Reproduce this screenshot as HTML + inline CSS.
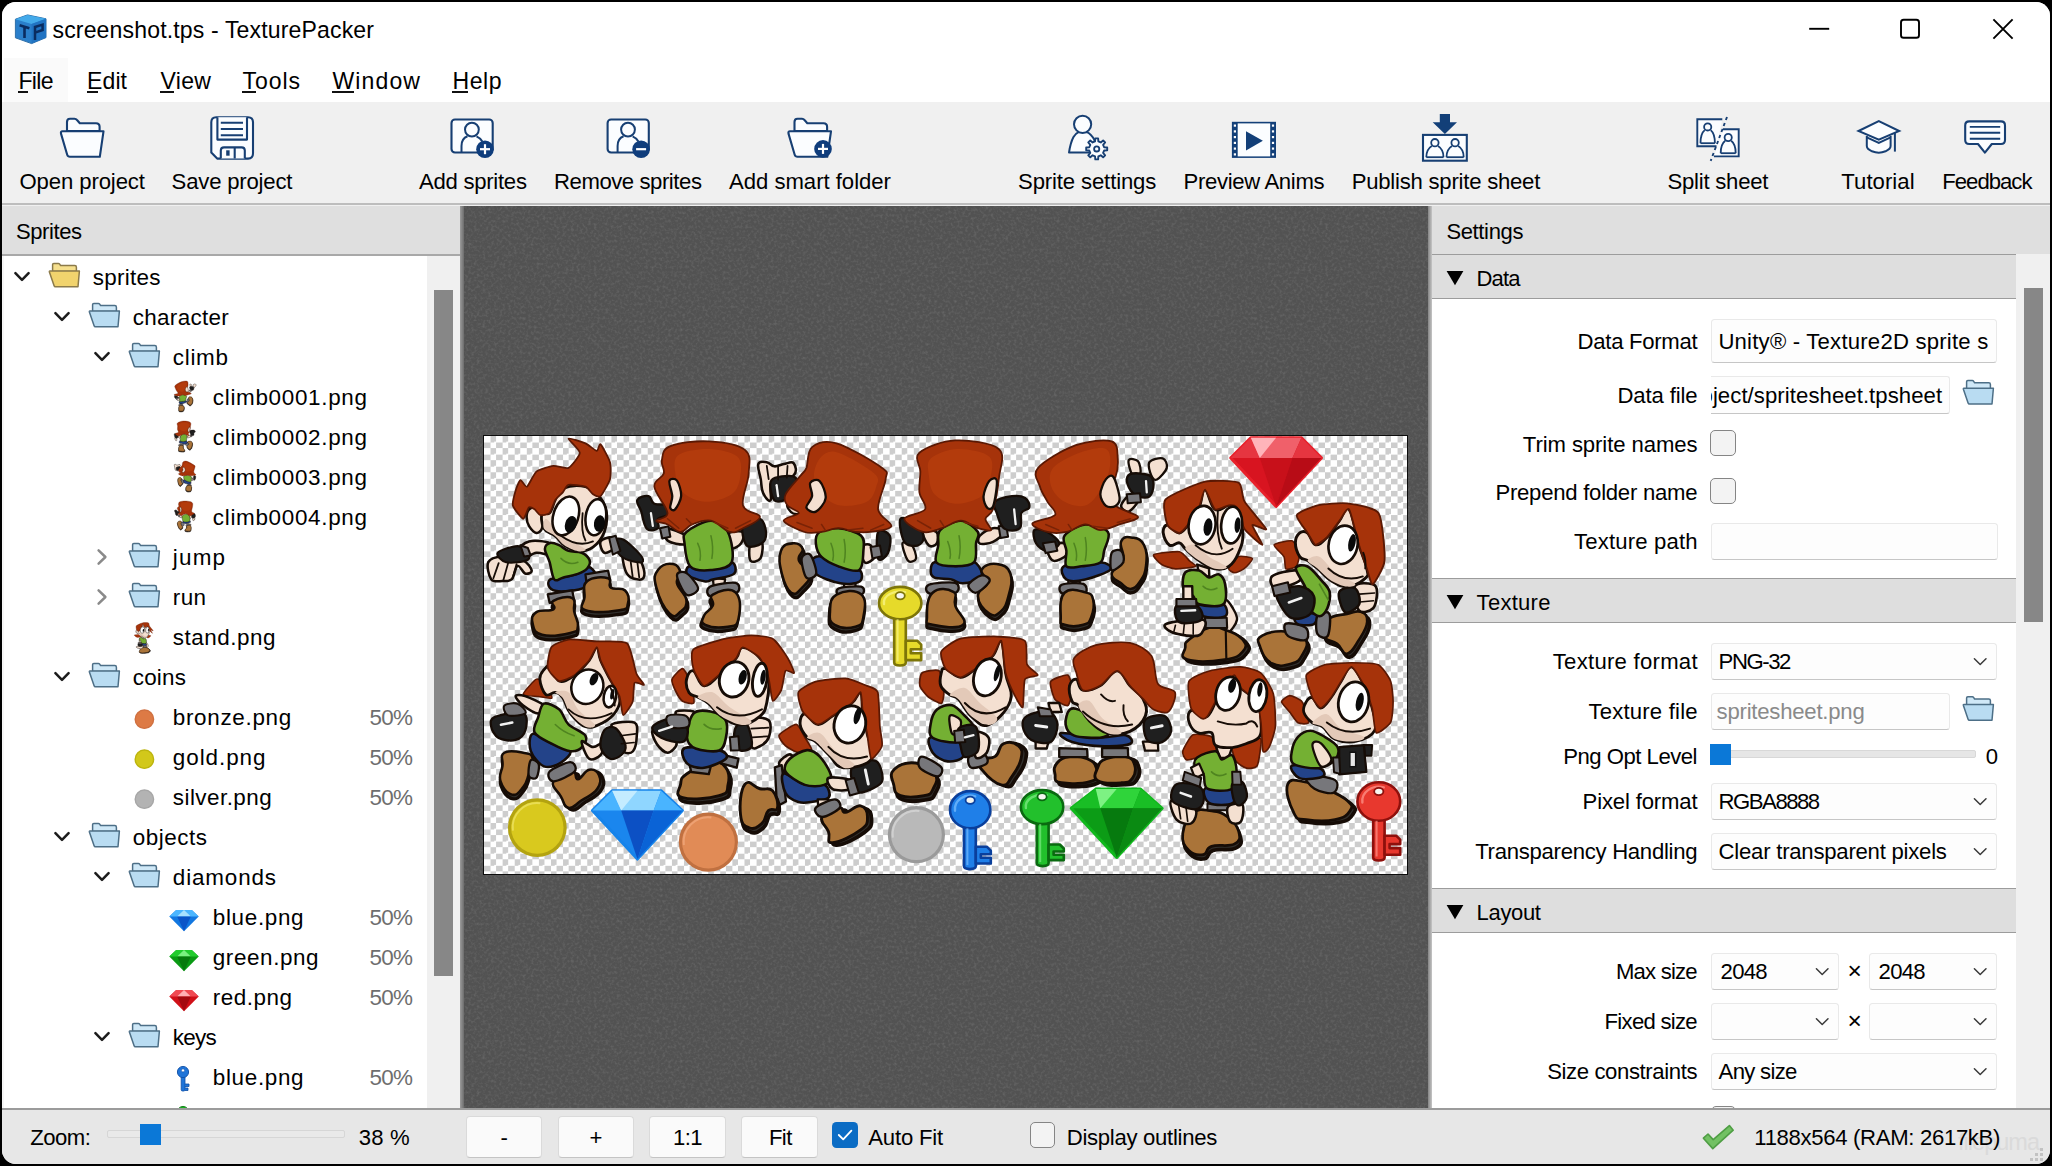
<!DOCTYPE html>
<html><head><meta charset="utf-8"><title>TexturePacker</title>
<style>
html,body{margin:0;padding:0;background:#000;}
body{width:2052px;height:1166px;position:relative;overflow:hidden;font-family:"Liberation Sans",sans-serif;}
.t{position:absolute;white-space:nowrap;}
.b{position:absolute;}
svg{position:absolute;overflow:visible}
</style></head><body>
<div id="win" style="position:absolute;left:2px;top:2px;width:2048px;height:1162px;background:#f0f0f0;border-radius:14px;overflow:hidden"></div>
<div class="b" style="left:2.00px;top:2.00px;width:2048.00px;height:100.00px;background:#ffffff;border-radius:14px 14px 0 0;"></div>
<div class="b" style="left:4.00px;top:58.00px;width:64.00px;height:44.00px;background:#fafafa;"></div>
<div class="b" style="left:2.00px;top:102.00px;width:2048.00px;height:102.00px;background:#f0f0f0;"></div>
<div class="b" style="left:2.00px;top:203.00px;width:2048.00px;height:2.00px;background:#bdbdbd;"></div>
<svg class="b" style="left:12px;top:12px" width="38" height="36" viewBox="12 12 38 36"><path d="M15.4 19.2 L27.5 14.9 L46 18.8 L46 37.6 L31.6 43.6 L15.4 37.8 Z" fill="#2a7fcb" stroke="#2f6fa8" stroke-width="1" stroke-linejoin="round"/><path d="M15.4 19.2 L27.5 14.9 L46 18.8 L31.6 24 Z" fill="#43aaea"/><path d="M31.6 24 L46 18.8 L46 37.6 L31.6 43.6 Z" fill="#2173c2"/><path d="M19.6 25.2 L29.4 28.2 M24.5 26.8 V38" stroke="#0a2c60" stroke-width="2.6" fill="none"/><path d="M35 40 V27 L42.6 24.6 V30 L35 32.6" stroke="#0a2c60" stroke-width="2.5" fill="none"/></svg>
<div class="t" style="left:52.50px;top:17.43px;font-size:23.05px;line-height:27.66px;letter-spacing:0.145px;color:#000;">screenshot.tps - TexturePacker</div>
<div class="t" style="left:18.50px;top:67.53px;font-size:23.05px;line-height:27.66px;letter-spacing:-0.714px;color:#000;">File</div>
<div class="b" style="left:18.20px;top:91.30px;width:9.60px;height:1.80px;background:#111;"></div>
<div class="t" style="left:87.00px;top:67.53px;font-size:23.05px;line-height:27.66px;letter-spacing:0.093px;color:#000;">Edit</div>
<div class="b" style="left:86.70px;top:91.30px;width:11.80px;height:1.80px;background:#111;"></div>
<div class="t" style="left:160.50px;top:67.53px;font-size:23.05px;line-height:27.66px;letter-spacing:0.318px;color:#000;">View</div>
<div class="b" style="left:160.20px;top:91.30px;width:13.80px;height:1.80px;background:#111;"></div>
<div class="t" style="left:242.50px;top:67.53px;font-size:23.05px;line-height:27.66px;letter-spacing:0.922px;color:#000;">Tools</div>
<div class="b" style="left:242.20px;top:91.30px;width:13.80px;height:1.80px;background:#111;"></div>
<div class="t" style="left:332.50px;top:67.53px;font-size:23.05px;line-height:27.66px;letter-spacing:1.103px;color:#000;">Window</div>
<div class="b" style="left:332.20px;top:91.30px;width:21.40px;height:1.80px;background:#111;"></div>
<div class="t" style="left:452.50px;top:67.53px;font-size:23.05px;line-height:27.66px;letter-spacing:0.531px;color:#000;">Help</div>
<div class="b" style="left:452.20px;top:91.30px;width:15.60px;height:1.80px;background:#111;"></div>
<svg class="b" style="left:1800px;top:10px" width="240" height="40" viewBox="1800 10 240 40" fill="none" stroke="#000" stroke-width="1.9"><path d="M1809.2 28.8 H1829.2"/><rect x="1901" y="19.8" width="18" height="18" rx="2.6"/><path d="M1993.4 19.4 L2012.6 38.6 M2012.6 19.4 L1993.4 38.6"/></svg>
<div class="t" style="left:19.50px;top:168.80px;font-size:22.13px;line-height:26.56px;letter-spacing:-0.111px;color:#000;">Open project</div>
<div class="t" style="left:171.60px;top:168.80px;font-size:22.13px;line-height:26.56px;letter-spacing:-0.193px;color:#000;">Save project</div>
<div class="t" style="left:419.00px;top:168.80px;font-size:22.13px;line-height:26.56px;letter-spacing:-0.272px;color:#000;">Add sprites</div>
<div class="t" style="left:554.00px;top:168.80px;font-size:22.13px;line-height:26.56px;letter-spacing:-0.442px;color:#000;">Remove sprites</div>
<div class="t" style="left:729.00px;top:168.80px;font-size:22.13px;line-height:26.56px;letter-spacing:-0.025px;color:#000;">Add smart folder</div>
<div class="t" style="left:1018.00px;top:168.80px;font-size:22.13px;line-height:26.56px;letter-spacing:-0.132px;color:#000;">Sprite settings</div>
<div class="t" style="left:1183.50px;top:168.80px;font-size:22.13px;line-height:26.56px;letter-spacing:-0.337px;color:#000;">Preview Anims</div>
<div class="t" style="left:1351.70px;top:168.80px;font-size:22.13px;line-height:26.56px;letter-spacing:-0.234px;color:#000;">Publish sprite sheet</div>
<div class="t" style="left:1667.50px;top:168.80px;font-size:22.13px;line-height:26.56px;letter-spacing:-0.235px;color:#000;">Split sheet</div>
<div class="t" style="left:1841.30px;top:168.80px;font-size:22.13px;line-height:26.56px;letter-spacing:0.046px;color:#000;">Tutorial</div>
<div class="t" style="left:1942.30px;top:168.80px;font-size:22.13px;line-height:26.56px;letter-spacing:-0.999px;color:#000;">Feedback</div>
<svg class="b" style="left:0;top:0" width="2052" height="210" viewBox="0 0 2052 210">
<g transform="translate(0.0,0)" fill="#fbfdff" stroke="#173f73" stroke-width="2.1" stroke-linejoin="round"><path d="M67 131 V122 Q67 118.8 70 118.8 H74.5 Q76 118.8 77 120 L79.8 123.2 H96 Q99.6 123.2 99.6 126.8 V131 Z"/><path d="M62.5 131.3 H103.5 L99.8 156.8 H70 Q67.8 156.8 67.2 154.8 L61 133.6 Q60.5 131.3 62.5 131.3 Z"/></g>
<g fill="#fbfdff" stroke="#173f73" stroke-width="2.1" stroke-linejoin="round"><path d="M216.2 117.2 H248 Q253 117.2 253 122.2 V153.6 Q253 158.6 248 158.6 H217.2 L211.3 152.6 V122.2 Q211.3 117.2 216.2 117.2 Z"/><path d="M217.4 117.2 V139.6 H247 V117.2"/><path d="M220.8 122.8 H243 M220.8 129 H243 M220.8 135.2 H243" stroke-width="1.9"/><path d="M220.8 158.6 V150.6 Q220.8 147.4 224 147.4 H241.6 Q244.8 147.4 244.8 150.6 V158.6 M234.7 147.4 V158.6"/><rect x="226.2" y="150.3" width="3.4" height="5.4" fill="#173f73" stroke="none"/></g>
<g transform="translate(0.0,0)"><rect x="451.5" y="119.5" width="41.2" height="33" rx="3.5" fill="#fbfdff" stroke="#173f73" stroke-width="2.1"/><circle cx="471.9" cy="129.6" r="6.9" fill="#fbfdff" stroke="#173f73" stroke-width="2"/><path d="M461.5 152.5 V146 Q461.5 138.5 467.5 136.3 M476.5 136.3 Q480.5 138 482.3 141.5" fill="none" stroke="#173f73" stroke-width="2"/><circle cx="485.0" cy="149.2" r="8.8" fill="#0f3d7c"/><path d="M480.0 149.2 h10" stroke="#fff" stroke-width="2.2"/><path d="M485.0 144.2 v10" stroke="#fff" stroke-width="2.2"/></g>
<g transform="translate(156.1,0)"><rect x="451.5" y="119.5" width="41.2" height="33" rx="3.5" fill="#fbfdff" stroke="#173f73" stroke-width="2.1"/><circle cx="471.9" cy="129.6" r="6.9" fill="#fbfdff" stroke="#173f73" stroke-width="2"/><path d="M461.5 152.5 V146 Q461.5 138.5 467.5 136.3 M476.5 136.3 Q480.5 138 482.3 141.5" fill="none" stroke="#173f73" stroke-width="2"/><circle cx="485.0" cy="149.2" r="8.8" fill="#0f3d7c"/><path d="M480.0 149.2 h10" stroke="#fff" stroke-width="2.2"/></g>
<g transform="translate(727.5,0)" fill="#fbfdff" stroke="#173f73" stroke-width="2.1" stroke-linejoin="round"><path d="M67 131 V122 Q67 118.8 70 118.8 H74.5 Q76 118.8 77 120 L79.8 123.2 H96 Q99.6 123.2 99.6 126.8 V131 Z"/><path d="M62.5 131.3 H103.5 L99.8 156.8 H70 Q67.8 156.8 67.2 154.8 L61 133.6 Q60.5 131.3 62.5 131.3 Z"/></g>
<circle cx="823.0" cy="148.9" r="8.8" fill="#0f3d7c"/><path d="M818.0 148.9 h10" stroke="#fff" stroke-width="2.2"/><path d="M823.0 143.9 v10" stroke="#fff" stroke-width="2.2"/>
<g fill="#fbfdff" stroke="#173f73" stroke-width="2" stroke-linejoin="round"><path d="M1069 152.6 Q1070.5 142.5 1073.5 137 Q1075.5 133.6 1078.5 132.2 L1087 132.2 Q1091 134 1094.5 140 L1094.5 152.6 Z"/><circle cx="1082.6" cy="124.3" r="8.6"/></g>
<path d="M1104.12 147.24 L1107.21 147.49 L1107.21 150.31 L1104.12 150.56 L1103.12 152.97 L1105.13 155.33 L1103.13 157.33 L1100.77 155.32 L1098.36 156.32 L1098.11 159.41 L1095.29 159.41 L1095.04 156.32 L1092.63 155.32 L1090.27 157.33 L1088.27 155.33 L1090.28 152.97 L1089.28 150.56 L1086.19 150.31 L1086.19 147.49 L1089.28 147.24 L1090.28 144.83 L1088.27 142.47 L1090.27 140.47 L1092.63 142.48 L1095.04 141.48 L1095.29 138.39 L1098.11 138.39 L1098.36 141.48 L1100.77 142.48 L1103.13 140.47 L1105.13 142.47 L1103.12 144.83 Z" fill="#fbfdff" stroke="#173f73" stroke-width="1.9" stroke-linejoin="round"/><circle cx="1096.7" cy="148.9" r="2.6" fill="#fbfdff" stroke="#173f73" stroke-width="1.8"/>
<rect x="1231.9" y="121.8" width="44.1" height="36.1" fill="#123f78"/><rect x="1237.7" y="123.4" width="32.5" height="33" fill="#fbfdff"/>
<rect x="1233.8" y="124.5" width="2.2" height="2.2" fill="#fff"/><rect x="1271.9" y="124.5" width="2.2" height="2.2" fill="#fff"/>
<rect x="1233.8" y="130.3" width="2.2" height="2.2" fill="#fff"/><rect x="1271.9" y="130.3" width="2.2" height="2.2" fill="#fff"/>
<rect x="1233.8" y="136.0" width="2.2" height="2.2" fill="#fff"/><rect x="1271.9" y="136.0" width="2.2" height="2.2" fill="#fff"/>
<rect x="1233.8" y="141.8" width="2.2" height="2.2" fill="#fff"/><rect x="1271.9" y="141.8" width="2.2" height="2.2" fill="#fff"/>
<rect x="1233.8" y="147.5" width="2.2" height="2.2" fill="#fff"/><rect x="1271.9" y="147.5" width="2.2" height="2.2" fill="#fff"/>
<rect x="1233.8" y="153.3" width="2.2" height="2.2" fill="#fff"/><rect x="1271.9" y="153.3" width="2.2" height="2.2" fill="#fff"/>
<path d="M1246 131.3 V150.6 L1262.9 140.8 Z" fill="#123f78"/>
<path d="M1439.8 114 H1450 V122.3 H1457 L1444.9 133.9 L1432.7 122.3 H1439.8 Z" fill="#123f78"/>
<rect x="1423" y="134.9" width="43.8" height="25.8" fill="#fbfdff" stroke="#173f73" stroke-width="2.1"/>
<path d="M1426.3 157.2 H1426.3 Q1426.3 149.4 1431.8 146.0 M1443.5 157.2 Q1443.5 149.4 1438.0 146.0" fill="none" stroke="#173f73" stroke-width="1.8"/><path d="M1426.3 157.2 H1443.5" stroke="#173f73" stroke-width="1.8"/><circle cx="1434.9" cy="142.7" r="3.7" fill="#fbfdff" stroke="#173f73" stroke-width="1.8"/>
<path d="M1446.5 157.2 H1446.5 Q1446.5 149.4 1452.0 146.0 M1463.7 157.2 Q1463.7 149.4 1458.2 146.0" fill="none" stroke="#173f73" stroke-width="1.8"/><path d="M1446.5 157.2 H1463.7" stroke="#173f73" stroke-width="1.8"/><circle cx="1455.1" cy="142.7" r="3.7" fill="#fbfdff" stroke="#173f73" stroke-width="1.8"/>
<g fill="none" stroke="#173f73" stroke-width="1.9"><path d="M1722.3 119.2 H1697.3 V146.3 H1716.5" fill="#fbfdff"/><path d="M1722.8 129.3 H1738.7 V156.4 H1714" fill="#fbfdff"/><path d="M1727 117 L1710.7 160.8" stroke-dasharray="3.2 3.2"/></g>
<path d="M1700.5 143.2 H1700.5 Q1700.5 133.5 1704.7 130.1 M1714.9 143.2 Q1714.9 133.5 1710.7 130.1" fill="none" stroke="#173f73" stroke-width="1.8"/><path d="M1700.5 143.2 H1714.9" stroke="#173f73" stroke-width="1.8"/><circle cx="1707.7" cy="126.9" r="3.6" fill="#fbfdff" stroke="#173f73" stroke-width="1.8"/>
<path d="M1720.7 153.2 H1720.7 Q1720.7 144.1 1725.2 140.7 M1735.7 153.2 Q1735.7 144.1 1731.2 140.7" fill="none" stroke="#173f73" stroke-width="1.8"/><path d="M1720.7 153.2 H1735.7" stroke="#173f73" stroke-width="1.8"/><circle cx="1728.2" cy="137.5" r="3.6" fill="#fbfdff" stroke="#173f73" stroke-width="1.8"/>
<g fill="#fbfdff" stroke="#173f73" stroke-width="2" stroke-linejoin="miter"><path d="M1866.8 136 V146 Q1866.8 149 1872 151.3 Q1878.8 154 1885.5 151.3 Q1890.6 149 1890.6 146 V136"/><path d="M1858.5 131 L1878.8 121 L1899.2 131 L1878.8 139.6 Z"/><path d="M1866.8 137.4 L1878.8 143 L1890.6 137.4" fill="none"/><path d="M1894.9 133 V151.6" fill="none"/></g>
<g fill="#fbfdff" stroke="#173f73" stroke-width="2.1" stroke-linejoin="round"><path d="M1969.2 121.4 H2001 Q2005 121.4 2005 125.4 V140 Q2005 144 2001 144 H1991.8 L1984.9 152.6 L1978 144 H1969.2 Q1965.2 144 1965.2 140 V125.4 Q1965.2 121.4 1969.2 121.4 Z"/><path d="M1969.8 126.9 H2000.2 M1969.8 132.7 H2000.2 M1969.8 138.7 H2000.2" stroke-width="1.9"/></g>
</svg>
<div class="b" style="left:2.00px;top:206.00px;width:458.00px;height:48.00px;background:#dfdfdf;"></div>
<div class="b" style="left:2.00px;top:254.00px;width:458.00px;height:1.60px;background:#a8a8a8;"></div>
<div class="t" style="left:16.00px;top:218.90px;font-size:22.03px;line-height:26.44px;letter-spacing:-0.428px;color:#000;">Sprites</div>
<div class="b" style="left:2.00px;top:255.60px;width:425.00px;height:853.00px;background:#ffffff;"></div>
<div class="b" style="left:2.00px;top:255.60px;width:2.20px;height:853.00px;background:#f6f6f6;"></div>
<div class="b" style="left:427.00px;top:255.60px;width:33.50px;height:853.00px;background:#f0f0f0;"></div>
<div class="b" style="left:434.10px;top:290.00px;width:18.80px;height:685.70px;background:#878787;"></div>
<div class="b" style="left:0;top:0;width:462px;height:1108.5px;overflow:hidden"><svg class="b" style="left:0;top:0" width="462" height="1109" viewBox="0 0 462 1109">
<path d="M15.4 273.1 L22.0 279.9 L28.6 273.1" fill="none" stroke="#1c1c1c" stroke-width="2.5" stroke-linecap="round" stroke-linejoin="round"/>
<g transform="translate(48.8,262.6)" stroke="#8b7a4a" stroke-width="1.5" stroke-linejoin="round"><path d="M3.8 9 V2 Q3.8 0.8 5 0.8 H9.5 Q10.4 0.8 10.9 1.6 L11.8 3 H26 Q27.6 3 27.6 4.6 V9 Z" fill="#f6e08e"/><path d="M1 8.4 H30.6 L29.2 24.2 H6.6 Q5.6 24.2 5.3 23.2 L0.6 9.4 Q0.4 8.4 1 8.4 Z" fill="#f1d36d"/></g>
<path d="M55.4 313.1 L62.0 319.9 L68.6 313.1" fill="none" stroke="#1c1c1c" stroke-width="2.5" stroke-linecap="round" stroke-linejoin="round"/>
<g transform="translate(88.8,302.6)" stroke="#4d6f87" stroke-width="1.5" stroke-linejoin="round"><path d="M3.8 9 V2 Q3.8 0.8 5 0.8 H9.5 Q10.4 0.8 10.9 1.6 L11.8 3 H26 Q27.6 3 27.6 4.6 V9 Z" fill="#cfe8f7"/><path d="M1 8.4 H30.6 L29.2 24.2 H6.6 Q5.6 24.2 5.3 23.2 L0.6 9.4 Q0.4 8.4 1 8.4 Z" fill="#b9dcf2"/></g>
<path d="M95.4 353.1 L102.0 359.9 L108.6 353.1" fill="none" stroke="#1c1c1c" stroke-width="2.5" stroke-linecap="round" stroke-linejoin="round"/>
<g transform="translate(128.8,342.6)" stroke="#4d6f87" stroke-width="1.5" stroke-linejoin="round"><path d="M3.8 9 V2 Q3.8 0.8 5 0.8 H9.5 Q10.4 0.8 10.9 1.6 L11.8 3 H26 Q27.6 3 27.6 4.6 V9 Z" fill="#cfe8f7"/><path d="M1 8.4 H30.6 L29.2 24.2 H6.6 Q5.6 24.2 5.3 23.2 L0.6 9.4 Q0.4 8.4 1 8.4 Z" fill="#b9dcf2"/></g>
<g transform="translate(185.00,396.10) scale(0.1624) translate(-1099.0,-533.0)"><g transform="translate(1010,430) scale(0.18868)"><path d="M590 400 C592 385 625 345 640 340 C655 335 684 355 682 370 C680 385 645 427 630 432 C615 437 588 415 590 400 Z" fill="#f4e0d1" stroke="#160c06" stroke-width="13.5" stroke-linejoin="round"/><path d="M630 160 C635 148 670 153 680 165 C690 177 697 218 692 230 C687 242 660 249 650 237 C640 225 625 172 630 160 Z" fill="#f4e0d1" stroke="#160c06" stroke-width="12.15" stroke-linejoin="round"/><path d="M740 170 C750 155 795 145 810 150 C825 155 837 181 832 200 C827 219 794 255 780 262 C766 269 757 255 750 240 C743 225 730 185 740 170 Z" fill="#f4e0d1" stroke="#160c06" stroke-width="12.15" stroke-linejoin="round"/><path d="M620 260 C622 245 630 233 650 230 C670 227 721 230 740 240 C759 250 762 271 762 290 C762 309 754 342 740 352 C726 362 697 357 680 352 C663 347 650 335 640 320 C630 305 618 275 620 260 Z" fill="#1f1f1f" stroke="#160c06" stroke-width="12.15" stroke-linejoin="round"/><path d="M620 340 L690 335 L695 382 L625 388 Z" fill="#77777b" stroke="#160c06" stroke-width="10.8" stroke-linejoin="round"/><path d="M200 620 C210 605 273 593 290 600 C307 607 312 645 302 660 C292 675 247 699 230 692 C213 685 190 635 200 620 Z" fill="#f4e0d1" stroke="#160c06" stroke-width="13.5" stroke-linejoin="round"/><path d="M130 530 C140 520 178 528 200 540 C222 552 262 583 262 600 C262 617 220 642 200 642 C180 642 152 621 140 602 C128 583 120 540 130 530 Z" fill="#1f1f1f" stroke="#160c06" stroke-width="12.15" stroke-linejoin="round"/><path d="M175 600 L240 590 L252 640 L190 652 Z" fill="#77777b" stroke="#160c06" stroke-width="10.8" stroke-linejoin="round"/><path d="M310 795 L370 795 L372 835 L312 835 Z" fill="#f4e0d1" stroke="#160c06" stroke-width="12.15" stroke-linejoin="round"/><path d="M290 720 C320 705 440 697 480 700 C520 703 545 725 532 740 C519 755 439 783 400 792 C361 801 318 804 300 792 C282 780 260 735 290 720 Z" fill="#234389" stroke="#160c06" stroke-width="13.5" stroke-linejoin="round"/><path d="M290 560 C307 537 362 503 400 500 C438 497 503 517 520 540 C537 563 507 613 500 640 C493 667 500 688 480 702 C460 716 410 719 380 722 C350 725 313 736 300 722 C287 708 302 667 300 640 C298 613 273 583 290 560 Z" fill="#74b033" stroke="#160c06" stroke-width="13.5" stroke-linejoin="round"/><path d="M592 611 C605 584 624 587 652 591 C681 596 698 597 714 631 C732 667 730 697 724 741 C720 787 712 795 692 823 C674 852 666 861 642 863 C620 866 616 852 592 833 C570 815 541 812 542 783 C545 755 591 752 602 711 C615 672 581 640 592 611 Z" fill="#32302d" stroke="#160c06" stroke-width="17.55" stroke-linejoin="round"/><path d="M590 590 C602 562 622 565 650 570 C678 575 695 575 712 610 C729 645 727 675 722 720 C717 765 709 774 690 802 C671 830 663 840 640 842 C617 844 613 831 590 812 C567 793 538 790 540 762 C542 734 588 730 600 690 C612 650 578 618 590 590 Z" fill="#aa7439" stroke="#160c06" stroke-width="13.5" stroke-linejoin="round"/><path d="M540 650 C548 633 580 632 590 640 C600 648 610 683 602 700 C594 717 550 750 540 742 C530 734 532 667 540 650 Z" fill="#77777b" stroke="#160c06" stroke-width="12.15" stroke-linejoin="round"/><path d="M275 820 C293 811 370 807 390 815 C410 823 414 858 396 867 C378 876 300 875 280 867 C260 859 257 829 275 820 Z" fill="#77777b" stroke="#160c06" stroke-width="12.15" stroke-linejoin="round"/><path d="M293 883 C324 853 368 873 403 881 C439 891 438 891 445 921 C453 952 448 981 435 1011 C423 1043 427 1044 393 1053 C360 1064 321 1064 293 1053 C265 1044 273 1051 273 1011 C273 972 263 914 293 883 Z" fill="#32302d" stroke="#160c06" stroke-width="17.55" stroke-linejoin="round"/><path d="M290 862 C320 832 365 851 400 860 C435 869 435 870 442 900 C449 930 444 959 432 990 C420 1021 423 1022 390 1032 C357 1042 318 1042 290 1032 C262 1022 270 1030 270 990 C270 950 260 892 290 862 Z" fill="#aa7439" stroke="#160c06" stroke-width="13.5" stroke-linejoin="round"/><path d="M150 200 C182 163 285 103 350 80 C415 57 503 48 540 60 C577 72 569 118 572 150 C575 182 569 225 560 250 C551 275 520 275 520 300 C520 325 533 373 560 400 C587 427 677 443 680 460 C683 477 613 488 580 500 C547 512 510 530 480 530 C450 530 430 498 400 500 C370 502 333 533 300 540 C267 547 230 548 200 540 C170 532 113 510 120 495 C127 480 227 469 240 450 C253 431 213 405 200 380 C187 355 168 330 160 300 C152 270 118 237 150 200 Z" fill="#a6330a" stroke="#5a1803" stroke-width="9.45" stroke-linejoin="round"/><path d="M230 200 C255 170 323 137 370 120 C417 103 483 87 510 100 C537 113 535 163 530 200 C525 237 502 287 480 320 C458 353 432 390 400 400 C368 410 320 397 290 380 C260 363 230 330 220 300 C210 270 205 230 230 200 Z" fill="#b33b0c"/><path d="M510 260 C522 245 538 233 550 250 C562 267 580 335 582 360 C584 385 572 395 560 402 C548 409 523 412 510 402 C497 392 480 364 480 340 C480 316 498 275 510 260 Z" fill="#f4e0d1" stroke="#160c06" stroke-width="12.15" stroke-linejoin="round"/></g></g>
<g transform="translate(185.00,436.10) scale(0.1624) translate(-966.0,-533.0)"><g transform="translate(880,430) scale(0.18868)"><path d="M530 560 C542 546 578 523 600 520 C622 517 660 528 660 540 C660 552 622 582 600 592 C578 602 542 607 530 602 C518 597 518 574 530 560 Z" fill="#f4e0d1" stroke="#160c06" stroke-width="13.5" stroke-linejoin="round"/><path d="M230 540 C237 528 288 530 300 540 C312 550 309 588 302 600 C295 612 272 622 260 612 C248 602 223 552 230 540 Z" fill="#f4e0d1" stroke="#160c06" stroke-width="13.5" stroke-linejoin="round"/><path d="M120 600 C123 586 158 597 170 610 C182 623 195 666 192 680 C189 694 162 705 150 692 C138 679 117 614 120 600 Z" fill="#f4e0d1" stroke="#160c06" stroke-width="12.15" stroke-linejoin="round"/><path d="M110 470 C122 455 180 483 200 500 C220 517 232 551 232 570 C232 589 217 608 200 612 C183 616 145 616 130 592 C115 568 98 485 110 470 Z" fill="#1f1f1f" stroke="#160c06" stroke-width="12.15" stroke-linejoin="round"/><path d="M290 700 C312 695 365 720 400 720 C435 720 476 690 500 700 C524 710 552 761 542 780 C532 799 467 810 440 812 C413 814 405 797 380 792 C355 787 308 789 290 782 C272 775 270 764 270 750 C270 736 268 705 290 700 Z" fill="#234389" stroke="#160c06" stroke-width="13.5" stroke-linejoin="round"/><path d="M320 530 C340 508 397 478 430 480 C463 482 507 520 520 540 C533 560 513 573 510 600 C507 627 518 680 500 700 C482 720 433 722 400 722 C367 722 315 721 300 702 C285 683 307 639 310 610 C313 581 300 552 320 530 Z" fill="#74b033" stroke="#160c06" stroke-width="13.5" stroke-linejoin="round"/><path d="M544 761 C556 738 589 727 624 731 C660 736 682 742 696 781 C711 821 699 854 686 901 C675 949 669 962 644 983 C621 1005 613 1013 584 993 C557 974 527 939 524 901 C522 864 570 864 574 831 C579 799 533 785 544 761 Z" fill="#32302d" stroke="#160c06" stroke-width="17.55" stroke-linejoin="round"/><path d="M540 740 C552 717 585 705 620 710 C655 715 678 720 692 760 C706 800 694 833 682 880 C670 927 664 941 640 962 C616 983 608 991 580 972 C552 953 522 918 520 880 C518 842 565 843 570 810 C575 777 528 763 540 740 Z" fill="#aa7439" stroke="#160c06" stroke-width="13.5" stroke-linejoin="round"/><path d="M470 820 C475 805 521 773 540 770 C559 767 587 785 582 800 C577 815 529 859 510 862 C491 865 465 835 470 820 Z" fill="#77777b" stroke="#160c06" stroke-width="12.15" stroke-linejoin="round"/><path d="M260 820 C282 810 376 803 400 810 C424 817 424 852 402 862 C380 872 289 874 265 867 C241 860 238 830 260 820 Z" fill="#77777b" stroke="#160c06" stroke-width="12.15" stroke-linejoin="round"/><path d="M281 883 C314 853 363 863 391 878 C419 895 389 911 401 951 C413 993 471 1030 443 1053 C415 1078 326 1064 281 1053 C236 1044 251 1052 251 1011 C251 972 249 915 281 883 Z" fill="#32302d" stroke="#160c06" stroke-width="17.55" stroke-linejoin="round"/><path d="M280 862 C313 831 362 841 390 857 C418 873 388 889 400 930 C412 971 470 1008 442 1032 C414 1056 325 1042 280 1032 C235 1022 250 1030 250 990 C250 950 247 893 280 862 Z" fill="#aa7439" stroke="#160c06" stroke-width="13.5" stroke-linejoin="round"/><path d="M630 510 L670 505 L680 565 L640 572 Z" fill="#77777b" stroke="#160c06" stroke-width="10.8" stroke-linejoin="round"/><path d="M610 380 C626 362 668 354 700 350 C732 346 752 348 770 360 C788 372 796 394 792 410 C788 426 760 418 750 440 C740 462 760 504 742 520 C724 536 684 538 660 522 C636 506 630 468 620 440 C610 412 594 398 610 380 Z" fill="#1f1f1f" stroke="#160c06" stroke-width="12.15" stroke-linejoin="round"/><path d="M210 120 C241 92 330 58 400 55 C470 52 591 68 630 100 C669 132 637 197 632 250 C627 303 612 383 600 420 C588 457 562 452 560 470 C558 488 597 522 590 530 C583 538 547 528 520 520 C493 512 462 480 430 480 C398 480 363 510 330 520 C297 530 263 548 230 540 C197 532 128 490 130 470 C132 450 227 443 240 420 C253 397 214 363 210 330 C206 297 215 255 215 220 C215 185 179 148 210 120 Z" fill="#a6330a" stroke="#5a1803" stroke-width="9.45" stroke-linejoin="round"/><path d="M270 150 C295 127 358 102 410 100 C462 98 551 113 580 140 C609 167 592 225 585 260 C578 295 571 328 540 350 C509 372 442 392 400 390 C358 388 313 365 290 340 C267 315 263 272 260 240 C257 208 245 173 270 150 Z" fill="#b33b0c"/><path d="M580 270 C592 256 616 246 620 268 C624 290 610 376 602 400 C594 424 579 420 570 412 C561 404 548 374 550 350 C552 326 568 284 580 270 Z" fill="#f4e0d1" stroke="#160c06" stroke-width="12.15" stroke-linejoin="round"/></g></g>
<g transform="translate(185.00,476.10) scale(0.1624) translate(-824.5,-534.0)"><g transform="translate(750,430) scale(0.18868)"><path d="M590 620 C595 605 628 601 640 610 C652 619 667 657 662 672 C657 687 622 711 610 702 C598 693 585 635 590 620 Z" fill="#f4e0d1" stroke="#160c06" stroke-width="13.5" stroke-linejoin="round"/><path d="M680 540 C690 520 733 541 742 560 C751 579 742 632 732 652 C722 672 689 701 680 682 C671 663 670 560 680 540 Z" fill="#1f1f1f" stroke="#160c06" stroke-width="12.15" stroke-linejoin="round"/><path d="M640 620 L690 612 L700 668 L650 680 Z" fill="#77777b" stroke="#160c06" stroke-width="10.8" stroke-linejoin="round"/><path d="M500 805 L560 805 L560 845 L500 845 Z" fill="#f4e0d1" stroke="#160c06" stroke-width="12.15" stroke-linejoin="round"/><path d="M330 690 C335 675 357 665 380 670 C403 675 437 708 470 720 C503 732 561 726 580 740 C599 754 599 790 582 802 C565 814 519 819 480 812 C441 805 375 782 350 762 C325 742 325 705 330 690 Z" fill="#234389" stroke="#160c06" stroke-width="13.5" stroke-linejoin="round"/><path d="M370 540 C390 527 433 517 470 520 C507 523 568 540 590 560 C612 580 604 610 602 640 C600 670 602 728 580 742 C558 756 503 734 470 722 C437 710 400 692 380 672 C360 652 352 622 350 600 C348 578 350 553 370 540 Z" fill="#74b033" stroke="#160c06" stroke-width="13.5" stroke-linejoin="round"/><path d="M173 660 C188 622 212 623 238 620 C265 618 282 629 288 650 C296 671 259 680 268 710 C278 741 324 747 328 780 C333 813 312 828 288 852 C265 876 254 899 228 882 C203 866 191 834 178 782 C166 730 160 698 173 660 Z" fill="#32302d" stroke="#160c06" stroke-width="17.55" stroke-linejoin="round"/><path d="M165 640 C179 602 203 602 230 600 C257 598 273 609 280 630 C287 651 251 660 260 690 C269 720 315 727 320 760 C325 793 303 808 280 832 C257 856 246 878 220 862 C194 846 183 814 170 762 C157 710 151 678 165 640 Z" fill="#aa7439" stroke="#160c06" stroke-width="13.5" stroke-linejoin="round"/><path d="M275 680 C278 660 307 647 320 660 C333 673 355 740 352 760 C349 780 313 795 300 782 C287 769 272 700 275 680 Z" fill="#77777b" stroke="#160c06" stroke-width="12.15" stroke-linejoin="round"/><path d="M470 840 C488 831 570 825 590 830 C610 835 610 863 592 872 C574 881 500 887 480 882 C460 877 452 849 470 840 Z" fill="#77777b" stroke="#160c06" stroke-width="12.15" stroke-linejoin="round"/><path d="M457 893 C496 872 554 864 587 891 C621 919 606 972 599 1011 C592 1052 593 1054 557 1063 C522 1074 479 1073 447 1053 C416 1035 420 1021 422 983 C425 947 419 915 457 893 Z" fill="#32302d" stroke="#160c06" stroke-width="17.55" stroke-linejoin="round"/><path d="M460 872 C498 851 557 842 590 870 C623 898 609 950 602 990 C595 1030 595 1032 560 1042 C525 1052 482 1051 450 1032 C418 1013 423 999 425 962 C427 925 422 893 460 872 Z" fill="#aa7439" stroke="#160c06" stroke-width="13.5" stroke-linejoin="round"/><path d="M45 180 C51 162 73 168 90 170 C107 172 112 190 130 192 C148 194 160 183 180 180 C200 177 222 163 232 175 C242 187 254 221 232 240 C210 259 144 246 120 272 C96 298 120 360 110 372 C100 384 80 354 70 332 C60 310 63 290 58 260 C53 230 39 198 45 180 Z" fill="#f4e0d1" stroke="#160c06" stroke-width="13.5" stroke-linejoin="round"/><path d="M115 265 C132 244 207 239 230 245 C253 251 257 280 252 300 C247 320 220 350 200 362 C180 374 144 388 130 372 C116 356 98 286 115 265 Z" fill="#1f1f1f" stroke="#160c06" stroke-width="12.15" stroke-linejoin="round"/><path d="M200 390 C210 378 273 363 290 370 C307 377 312 418 302 430 C292 442 247 449 230 442 C213 435 190 402 200 390 Z" fill="#f4e0d1" stroke="#160c06" stroke-width="12.15" stroke-linejoin="round"/><path d="M330 90 C357 68 398 52 460 70 C522 88 657 168 700 200 C743 232 723 223 720 260 C717 297 675 378 680 420 C685 462 757 490 750 510 C743 530 672 535 640 540 C608 545 588 543 560 540 C532 537 500 520 470 520 C440 520 410 537 380 540 C350 543 323 550 290 540 C257 530 185 497 180 480 C175 463 257 453 260 440 C263 427 212 417 200 400 C188 383 178 367 190 340 C202 313 252 263 270 240 C288 217 290 225 300 200 C310 175 303 112 330 90 Z" fill="#a6330a" stroke="#5a1803" stroke-width="9.45" stroke-linejoin="round"/><path d="M380 140 C402 120 423 105 470 120 C517 135 627 200 660 230 C693 260 677 275 670 300 C663 325 652 363 620 380 C588 397 520 407 480 400 C440 393 403 367 380 340 C357 313 340 273 340 240 C340 207 358 160 380 140 Z" fill="#b33b0c"/><path d="M320 280 C327 267 356 257 370 270 C384 283 405 333 402 360 C399 387 367 424 350 432 C333 440 303 424 300 410 C297 396 327 372 330 350 C333 328 313 293 320 280 Z" fill="#f4e0d1" stroke="#160c06" stroke-width="12.15" stroke-linejoin="round"/></g></g>
<g transform="translate(185.00,516.10) scale(0.1624) translate(-702.0,-534.0)"><g transform="translate(630,430) scale(0.18868)"><path d="M190 520 C207 516 283 546 300 560 C317 574 307 601 290 605 C273 609 217 599 200 585 C183 571 173 524 190 520 Z" fill="#f4e0d1" stroke="#160c06" stroke-width="13.5" stroke-linejoin="round"/><path d="M520 550 C530 536 588 532 600 540 C612 548 600 586 590 600 C580 614 552 633 540 625 C528 617 510 564 520 550 Z" fill="#f4e0d1" stroke="#160c06" stroke-width="13.5" stroke-linejoin="round"/><path d="M640 605 C650 589 691 582 700 595 C709 608 702 664 692 680 C682 696 649 704 640 692 C631 680 630 621 640 605 Z" fill="#f4e0d1" stroke="#160c06" stroke-width="13.5" stroke-linejoin="round"/><path d="M600 500 C612 476 670 463 690 470 C710 477 720 518 722 540 C724 562 717 588 700 600 C683 612 637 629 620 612 C603 595 588 524 600 500 Z" fill="#1f1f1f" stroke="#160c06" stroke-width="12.15" stroke-linejoin="round"/><path d="M440 785 L505 790 L500 830 L445 830 Z" fill="#f4e0d1" stroke="#160c06" stroke-width="12.15" stroke-linejoin="round"/><path d="M320 720 C342 717 393 743 430 740 C467 737 520 696 540 700 C560 704 569 747 552 762 C535 777 465 785 440 792 C415 799 418 804 400 802 C382 800 347 789 330 782 C313 775 302 770 300 760 C298 750 298 723 320 720 Z" fill="#234389" stroke="#160c06" stroke-width="13.5" stroke-linejoin="round"/><path d="M300 540 C323 520 393 480 430 480 C467 480 502 503 520 540 C538 577 555 666 540 700 C525 734 467 738 430 742 C393 746 343 746 320 722 C297 698 293 630 290 600 C287 570 277 560 300 540 Z" fill="#74b033" stroke="#160c06" stroke-width="13.5" stroke-linejoin="round"/><path d="M157 760 C178 732 209 726 237 730 C265 736 272 757 277 780 C282 805 250 800 257 832 C264 866 302 886 307 920 C312 956 298 966 277 982 C256 1000 247 1023 217 992 C187 963 161 907 147 852 C133 799 136 789 157 760 Z" fill="#32302d" stroke="#160c06" stroke-width="17.55" stroke-linejoin="round"/><path d="M150 740 C171 712 202 705 230 710 C258 715 265 736 270 760 C275 784 243 779 250 812 C257 845 295 865 300 900 C305 935 291 945 270 962 C249 979 240 1002 210 972 C180 942 154 886 140 832 C126 778 129 768 150 740 Z" fill="#aa7439" stroke="#160c06" stroke-width="13.5" stroke-linejoin="round"/><path d="M250 770 C250 751 281 746 300 758 C319 770 362 821 362 840 C362 859 319 884 300 872 C281 860 250 789 250 770 Z" fill="#77777b" stroke="#160c06" stroke-width="12.15" stroke-linejoin="round"/><path d="M425 830 C447 818 536 805 560 810 C584 815 588 850 566 862 C544 874 454 887 430 882 C406 877 403 842 425 830 Z" fill="#77777b" stroke="#160c06" stroke-width="12.15" stroke-linejoin="round"/><path d="M434 893 C462 877 523 851 554 881 C586 911 580 979 570 1021 C561 1064 556 1056 514 1063 C473 1071 424 1067 394 1053 C365 1039 379 1027 388 1003 C398 979 424 977 434 951 C445 926 406 910 434 893 Z" fill="#32302d" stroke="#160c06" stroke-width="17.55" stroke-linejoin="round"/><path d="M440 872 C468 856 528 830 560 860 C592 890 585 958 576 1000 C567 1042 561 1035 520 1042 C479 1049 429 1046 400 1032 C371 1018 385 1006 394 982 C403 958 429 956 440 930 C451 904 412 888 440 872 Z" fill="#aa7439" stroke="#160c06" stroke-width="13.5" stroke-linejoin="round"/><path d="M160 520 L205 510 L215 565 L172 575 Z" fill="#77777b" stroke="#160c06" stroke-width="10.8" stroke-linejoin="round"/><path d="M40 370 C48 354 82 346 100 350 C118 354 108 380 130 390 C152 400 196 388 210 400 C224 412 212 436 200 450 C188 464 160 456 150 470 C140 484 162 510 150 520 C138 530 108 540 90 522 C72 504 70 460 60 430 C50 400 32 386 40 370 Z" fill="#1f1f1f" stroke="#160c06" stroke-width="12.15" stroke-linejoin="round"/><path d="M215 85 C261 67 348 56 420 60 C492 64 572 74 610 105 C648 136 632 176 630 230 C628 284 589 358 600 400 C611 442 690 438 690 460 C690 482 629 505 600 520 C571 535 561 547 530 540 C499 533 467 487 430 480 C393 473 359 489 330 500 C301 511 294 540 270 540 C246 540 224 511 200 500 C176 489 140 491 140 480 C140 469 202 473 200 440 C198 407 134 338 130 300 C126 262 173 256 180 230 C187 204 164 187 170 160 C176 133 169 103 215 85 Z" fill="#a6330a" stroke="#5a1803" stroke-width="9.45" stroke-linejoin="round"/><path d="M260 130 C290 110 368 98 420 100 C472 102 542 115 570 140 C598 165 590 217 585 250 C580 283 571 318 540 340 C509 362 443 382 400 380 C357 378 307 357 280 330 C253 303 243 253 240 220 C237 187 230 150 260 130 Z" fill="#b33b0c"/><path d="M210 270 C214 256 240 255 250 268 C260 281 274 325 272 350 C270 375 250 410 240 420 C230 430 216 422 214 410 C212 398 226 373 225 350 C224 327 206 284 210 270 Z" fill="#f4e0d1" stroke="#160c06" stroke-width="12.15" stroke-linejoin="round"/></g></g>
<path d="M98.6 550.4 L105.4 557.0 L98.6 563.6" fill="none" stroke="#8a8a8a" stroke-width="2.5" stroke-linecap="round" stroke-linejoin="round"/>
<g transform="translate(128.8,542.6)" stroke="#4d6f87" stroke-width="1.5" stroke-linejoin="round"><path d="M3.8 9 V2 Q3.8 0.8 5 0.8 H9.5 Q10.4 0.8 10.9 1.6 L11.8 3 H26 Q27.6 3 27.6 4.6 V9 Z" fill="#cfe8f7"/><path d="M1 8.4 H30.6 L29.2 24.2 H6.6 Q5.6 24.2 5.3 23.2 L0.6 9.4 Q0.4 8.4 1 8.4 Z" fill="#b9dcf2"/></g>
<path d="M98.6 590.4 L105.4 597.0 L98.6 603.6" fill="none" stroke="#8a8a8a" stroke-width="2.5" stroke-linecap="round" stroke-linejoin="round"/>
<g transform="translate(128.8,582.6)" stroke="#4d6f87" stroke-width="1.5" stroke-linejoin="round"><path d="M3.8 9 V2 Q3.8 0.8 5 0.8 H9.5 Q10.4 0.8 10.9 1.6 L11.8 3 H26 Q27.6 3 27.6 4.6 V9 Z" fill="#cfe8f7"/><path d="M1 8.4 H30.6 L29.2 24.2 H6.6 Q5.6 24.2 5.3 23.2 L0.6 9.4 Q0.4 8.4 1 8.4 Z" fill="#b9dcf2"/></g>
<g transform="translate(143.80,637.60) scale(0.1678) translate(-1210.5,-570.0)"><g transform="translate(1150,450) scale(0.19728)"><path d="M20 530 C29 524 132 512 150 515 C168 518 192 552 200 560 C208 568 239 586 232 590 C225 594 147 603 130 602 C113 601 71 587 60 580 C49 573 11 536 20 530 Z" fill="#a6330a" stroke="#5a1803" stroke-width="8.1" stroke-linejoin="round"/><path d="M400 600 C402 592 438 545 450 540 C462 535 517 544 520 550 C523 556 489 593 480 600 C471 607 438 622 430 622 C422 622 398 608 400 600 Z" fill="#a6330a" stroke="#5a1803" stroke-width="8.1" stroke-linejoin="round"/><path d="M380 760 C387 747 410 783 420 800 C430 817 445 840 442 860 C439 880 411 919 400 922 C389 925 381 907 378 880 C375 853 373 773 380 760 Z" fill="#f4e0d1" stroke="#160c06" stroke-width="12.15" stroke-linejoin="round"/><path d="M217 973 C246 950 276 925 317 913 C360 902 358 909 397 923 C437 937 466 948 487 973 C509 999 511 1009 489 1033 C469 1057 463 1065 397 1075 C332 1085 254 1090 207 1075 C161 1061 195 1037 197 1013 C200 989 190 997 217 973 Z" fill="#32302d" stroke="#160c06" stroke-width="17.55" stroke-linejoin="round"/><path d="M200 960 C228 937 258 912 300 900 C342 888 340 896 380 910 C420 924 449 934 470 960 C491 986 493 996 472 1020 C451 1044 446 1052 380 1062 C314 1072 237 1076 190 1062 C143 1048 178 1024 180 1000 C182 976 172 983 200 960 Z" fill="#aa7439" stroke="#160c06" stroke-width="13.5" stroke-linejoin="round"/><path d="M280 850 L390 850 L392 902 L282 902 Z" fill="#77777b" stroke="#160c06" stroke-width="10.8" stroke-linejoin="round"/><path d="M250 780 C267 770 348 770 370 780 C392 790 399 832 382 842 C365 852 292 852 270 842 C248 832 233 790 250 780 Z" fill="#234389" stroke="#160c06" stroke-width="12.15" stroke-linejoin="round"/><path d="M240 580 L300 600 L302 645 L250 632 Z" fill="#f4e0d1" stroke="#160c06" stroke-width="12.15" stroke-linejoin="round"/><path d="M180 620 C193 605 230 606 250 610 C270 614 283 642 300 645 C317 648 336 624 350 630 C364 636 378 655 382 680 C386 705 394 765 372 782 C350 799 275 789 250 782 C225 775 233 754 220 740 C207 726 177 720 170 700 C163 680 167 635 180 620 Z" fill="#74b033" stroke="#160c06" stroke-width="13.5" stroke-linejoin="round"/><path d="M170 690 L215 690 L217 762 L170 762 Z" fill="#f4e0d1" stroke="#160c06" stroke-width="12.15" stroke-linejoin="round"/><path d="M85 880 C112 870 240 852 270 860 C300 868 272 916 262 930 C252 944 235 943 210 942 C185 941 131 932 110 922 C89 912 58 890 85 880 Z" fill="#f4e0d1" stroke="#160c06" stroke-width="13.5" stroke-linejoin="round"/><path d="M135 790 C150 776 219 778 240 790 C261 802 277 846 262 860 C247 874 171 884 150 872 C129 860 120 804 135 790 Z" fill="#1f1f1f" stroke="#160c06" stroke-width="12.15" stroke-linejoin="round"/><path d="M135 755 L235 755 L237 792 L135 792 Z" fill="#77777b" stroke="#160c06" stroke-width="10.8" stroke-linejoin="round"/><path d="M280 200 C296 202 306 284 330 300 C354 316 378 282 400 280 C422 278 426 262 440 290 C454 318 470 374 472 420 C474 466 464 486 450 520 C436 554 424 574 400 590 C376 606 360 608 330 602 C300 596 280 580 250 560 C220 540 200 518 180 500 C160 482 166 474 150 470 C134 466 116 492 100 482 C84 472 70 440 68 420 C66 400 74 380 90 380 C106 380 128 422 150 420 C172 418 180 396 200 370 C220 344 234 324 250 290 C266 256 264 198 280 200 Z" fill="#f4e0d1" stroke="#160c06" stroke-width="14.85" stroke-linejoin="round"/><path d="M180 500 C183 513 225 543 250 560 C275 577 307 597 330 602 C353 607 395 602 390 592 C385 582 327 559 300 540 C273 521 250 487 230 480 C210 473 177 487 180 500 Z" fill="#e3c9b8"/><path d="M80 250 C99 228 243 168 280 160 C317 152 430 155 450 165 C470 175 466 236 480 260 C494 284 586 388 590 400 C594 412 522 372 520 380 C518 388 574 478 570 480 C566 482 493 419 480 400 C467 381 448 302 440 290 C432 278 411 279 400 280 C389 281 342 308 330 300 C318 292 288 201 280 200 C272 199 258 273 250 290 C242 307 210 357 200 370 C190 383 161 419 150 420 C139 421 97 397 90 380 C83 363 61 272 80 250 Z" fill="#a6330a" stroke="#5a1803" stroke-width="9.45" stroke-linejoin="round"/><ellipse cx="265" cy="380" rx="68" ry="98" fill="#ffffff" stroke="#160c06" stroke-width="13.5" transform="rotate(8 265 380)"/><ellipse cx="295" cy="390" rx="22" ry="45" fill="#0a0a0a" transform="rotate(8 295 390)"/><ellipse cx="415" cy="380" rx="53" ry="93" fill="#ffffff" stroke="#160c06" stroke-width="13.5" transform="rotate(5 415 380)"/><ellipse cx="445" cy="380" rx="15" ry="40" fill="#0a0a0a" transform="rotate(5 445 380)"/></g></g>
<path d="M55.4 673.1 L62.0 679.9 L68.6 673.1" fill="none" stroke="#1c1c1c" stroke-width="2.5" stroke-linecap="round" stroke-linejoin="round"/>
<g transform="translate(88.8,662.6)" stroke="#4d6f87" stroke-width="1.5" stroke-linejoin="round"><path d="M3.8 9 V2 Q3.8 0.8 5 0.8 H9.5 Q10.4 0.8 10.9 1.6 L11.8 3 H26 Q27.6 3 27.6 4.6 V9 Z" fill="#cfe8f7"/><path d="M1 8.4 H30.6 L29.2 24.2 H6.6 Q5.6 24.2 5.3 23.2 L0.6 9.4 Q0.4 8.4 1 8.4 Z" fill="#b9dcf2"/></g>
<circle cx="144.4" cy="719.2" r="9.2" fill="#dd7a45" stroke="#cf7040" stroke-width="1.4"/>
<circle cx="144.4" cy="759.2" r="9.2" fill="#d2c81a" stroke="#bcb40e" stroke-width="1.4"/>
<circle cx="144.4" cy="799.2" r="9.2" fill="#b3b3b3" stroke="#a6a6a6" stroke-width="1.4"/>
<path d="M55.4 833.1 L62.0 839.9 L68.6 833.1" fill="none" stroke="#1c1c1c" stroke-width="2.5" stroke-linecap="round" stroke-linejoin="round"/>
<g transform="translate(88.8,822.6)" stroke="#4d6f87" stroke-width="1.5" stroke-linejoin="round"><path d="M3.8 9 V2 Q3.8 0.8 5 0.8 H9.5 Q10.4 0.8 10.9 1.6 L11.8 3 H26 Q27.6 3 27.6 4.6 V9 Z" fill="#cfe8f7"/><path d="M1 8.4 H30.6 L29.2 24.2 H6.6 Q5.6 24.2 5.3 23.2 L0.6 9.4 Q0.4 8.4 1 8.4 Z" fill="#b9dcf2"/></g>
<path d="M95.4 873.1 L102.0 879.9 L108.6 873.1" fill="none" stroke="#1c1c1c" stroke-width="2.5" stroke-linecap="round" stroke-linejoin="round"/>
<g transform="translate(128.8,862.6)" stroke="#4d6f87" stroke-width="1.5" stroke-linejoin="round"><path d="M3.8 9 V2 Q3.8 0.8 5 0.8 H9.5 Q10.4 0.8 10.9 1.6 L11.8 3 H26 Q27.6 3 27.6 4.6 V9 Z" fill="#cfe8f7"/><path d="M1 8.4 H30.6 L29.2 24.2 H6.6 Q5.6 24.2 5.3 23.2 L0.6 9.4 Q0.4 8.4 1 8.4 Z" fill="#b9dcf2"/></g>
<g transform="translate(184.0,920.2)"><g transform="scale(0.98,0.93)"><path d="M-15 -4 L-8 -11 H8 L15 -4 L0 12 Z" fill="#1277e0"/><path d="M-15 -4 L-8 -11 H8 L15 -4 Z" fill="#4bb6ff"/><path d="M-7 -4 L0 -11 L7 -4 Z" fill="#a8e2ff"/><path d="M-7 -4 H7 L0 12 Z" fill="#0a55c8"/></g></g>
<g transform="translate(184.0,960.2)"><g transform="scale(0.98,0.93)"><path d="M-15 -4 L-8 -11 H8 L15 -4 L0 12 Z" fill="#0a9a14"/><path d="M-15 -4 L-8 -11 H8 L15 -4 Z" fill="#22cc2e"/><path d="M-7 -4 L0 -11 L7 -4 Z" fill="#7af07f"/><path d="M-7 -4 H7 L0 12 Z" fill="#067a0c"/></g></g>
<g transform="translate(184.0,1000.2)"><g transform="scale(0.98,0.93)"><path d="M-15 -4 L-8 -11 H8 L15 -4 L0 12 Z" fill="#d01018"/><path d="M-15 -4 L-8 -11 H8 L15 -4 Z" fill="#f04a52"/><path d="M-7 -4 L0 -11 L7 -4 Z" fill="#ffb0b4"/><path d="M-7 -4 H7 L0 12 Z" fill="#a40a10"/></g></g>
<path d="M95.4 1033.1 L102.0 1039.9 L108.6 1033.1" fill="none" stroke="#1c1c1c" stroke-width="2.5" stroke-linecap="round" stroke-linejoin="round"/>
<g transform="translate(128.8,1022.6)" stroke="#4d6f87" stroke-width="1.5" stroke-linejoin="round"><path d="M3.8 9 V2 Q3.8 0.8 5 0.8 H9.5 Q10.4 0.8 10.9 1.6 L11.8 3 H26 Q27.6 3 27.6 4.6 V9 Z" fill="#cfe8f7"/><path d="M1 8.4 H30.6 L29.2 24.2 H6.6 Q5.6 24.2 5.3 23.2 L0.6 9.4 Q0.4 8.4 1 8.4 Z" fill="#b9dcf2"/></g>
<g transform="translate(183.0,1079.0)"><rect x="-1.8" y="-3" width="3.8" height="15" rx="1.2" fill="#1f74d8" stroke="#0d4ea6" stroke-width="0.8"/><path d="M2 5 H6 V7.5 H2 M2 9 H5 V11.5 H2" fill="#1f74d8" stroke="#0d4ea6" stroke-width="0.8"/><circle cx="0" cy="-7" r="5.6" fill="#1f74d8" stroke="#0d4ea6" stroke-width="0.9"/><circle cx="0" cy="-8.6" r="1.6" fill="#fff" stroke="#0d4ea6" stroke-width="0.6"/></g>
<g transform="translate(183.0,1119.0)"><rect x="-1.8" y="-3" width="3.8" height="15" rx="1.2" fill="#18b020" stroke="#0b7a12" stroke-width="0.8"/><path d="M2 5 H6 V7.5 H2 M2 9 H5 V11.5 H2" fill="#18b020" stroke="#0b7a12" stroke-width="0.8"/><circle cx="0" cy="-7" r="5.6" fill="#18b020" stroke="#0b7a12" stroke-width="0.9"/><circle cx="0" cy="-8.6" r="1.6" fill="#fff" stroke="#0b7a12" stroke-width="0.6"/></g>
</svg><div class="t" style="left:92.80px;top:265.11px;font-size:22.44px;line-height:26.93px;letter-spacing:0.268px;color:#000;">sprites</div>
<div class="t" style="left:132.80px;top:305.11px;font-size:22.44px;line-height:26.93px;letter-spacing:0.296px;color:#000;">character</div>
<div class="t" style="left:172.80px;top:345.11px;font-size:22.44px;line-height:26.93px;letter-spacing:0.709px;color:#000;">climb</div>
<div class="t" style="left:212.80px;top:385.11px;font-size:22.44px;line-height:26.93px;letter-spacing:0.688px;color:#000;">climb0001.png</div>
<div class="t" style="left:212.80px;top:425.11px;font-size:22.44px;line-height:26.93px;letter-spacing:0.688px;color:#000;">climb0002.png</div>
<div class="t" style="left:212.80px;top:465.11px;font-size:22.44px;line-height:26.93px;letter-spacing:0.688px;color:#000;">climb0003.png</div>
<div class="t" style="left:212.80px;top:505.11px;font-size:22.44px;line-height:26.93px;letter-spacing:0.688px;color:#000;">climb0004.png</div>
<div class="t" style="left:172.80px;top:545.11px;font-size:22.44px;line-height:26.93px;letter-spacing:1.188px;color:#000;">jump</div>
<div class="t" style="left:172.80px;top:585.11px;font-size:22.44px;line-height:26.93px;letter-spacing:0.385px;color:#000;">run</div>
<div class="t" style="left:172.80px;top:625.11px;font-size:22.44px;line-height:26.93px;letter-spacing:0.517px;color:#000;">stand.png</div>
<div class="t" style="left:132.80px;top:665.11px;font-size:22.44px;line-height:26.93px;letter-spacing:0.179px;color:#000;">coins</div>
<div class="t" style="left:172.80px;top:705.11px;font-size:22.44px;line-height:26.93px;letter-spacing:0.680px;color:#000;">bronze.png</div>
<div class="t" style="left:369.50px;top:705.11px;font-size:22.44px;line-height:26.93px;letter-spacing:-0.756px;color:#6e6e6e;">50%</div>
<div class="t" style="left:172.80px;top:745.11px;font-size:22.44px;line-height:26.93px;letter-spacing:0.944px;color:#000;">gold.png</div>
<div class="t" style="left:369.50px;top:745.11px;font-size:22.44px;line-height:26.93px;letter-spacing:-0.756px;color:#6e6e6e;">50%</div>
<div class="t" style="left:172.80px;top:785.11px;font-size:22.44px;line-height:26.93px;letter-spacing:0.456px;color:#000;">silver.png</div>
<div class="t" style="left:369.50px;top:785.11px;font-size:22.44px;line-height:26.93px;letter-spacing:-0.756px;color:#6e6e6e;">50%</div>
<div class="t" style="left:132.80px;top:825.11px;font-size:22.44px;line-height:26.93px;letter-spacing:0.534px;color:#000;">objects</div>
<div class="t" style="left:172.80px;top:865.11px;font-size:22.44px;line-height:26.93px;letter-spacing:0.858px;color:#000;">diamonds</div>
<div class="t" style="left:212.80px;top:905.11px;font-size:22.44px;line-height:26.93px;letter-spacing:0.673px;color:#000;">blue.png</div>
<div class="t" style="left:369.50px;top:905.11px;font-size:22.44px;line-height:26.93px;letter-spacing:-0.756px;color:#6e6e6e;">50%</div>
<div class="t" style="left:212.80px;top:945.11px;font-size:22.44px;line-height:26.93px;letter-spacing:0.593px;color:#000;">green.png</div>
<div class="t" style="left:369.50px;top:945.11px;font-size:22.44px;line-height:26.93px;letter-spacing:-0.756px;color:#6e6e6e;">50%</div>
<div class="t" style="left:212.80px;top:985.11px;font-size:22.44px;line-height:26.93px;letter-spacing:0.517px;color:#000;">red.png</div>
<div class="t" style="left:369.50px;top:985.11px;font-size:22.44px;line-height:26.93px;letter-spacing:-0.756px;color:#6e6e6e;">50%</div>
<div class="t" style="left:172.80px;top:1025.11px;font-size:22.44px;line-height:26.93px;letter-spacing:-0.713px;color:#000;">keys</div>
<div class="t" style="left:212.80px;top:1065.11px;font-size:22.44px;line-height:26.93px;letter-spacing:0.673px;color:#000;">blue.png</div>
<div class="t" style="left:369.50px;top:1065.11px;font-size:22.44px;line-height:26.93px;letter-spacing:-0.756px;color:#6e6e6e;">50%</div>
<div class="t" style="left:212.80px;top:1105.11px;font-size:22.44px;line-height:26.93px;letter-spacing:0.593px;color:#000;">green.png</div>
<div class="t" style="left:369.50px;top:1105.11px;font-size:22.44px;line-height:26.93px;letter-spacing:-0.756px;color:#6e6e6e;">50%</div></div>
<div class="b" style="left:460.40px;top:206.00px;width:971.60px;height:902.50px;background:#525252;"></div>
<svg class="b" style="left:460.4px;top:206px" width="971.6" height="902.5"><filter id="nz" x="0" y="0" width="100%" height="100%"><feTurbulence type="fractalNoise" baseFrequency="0.35 0.35" numOctaves="2" seed="7"/><feColorMatrix type="matrix" values="0 0 0 0 1  0 0 0 0 1  0 0 0 0 1  1.1 0 0 0 -0.48"/></filter><rect width="971.6" height="902.5" filter="url(#nz)" opacity="0.22"/></svg>
<div class="b" style="left:460.10px;top:206.00px;width:4.00px;height:902.50px;background:linear-gradient(90deg,#9c9c9c,#6c6c6c);"></div>
<div class="b" style="left:1427.80px;top:206.00px;width:4.20px;height:902.50px;background:linear-gradient(90deg,#858585,#c6c6c6);"></div>
<div class="b" style="left:483.20px;top:434.90px;width:924.80px;height:440.10px;background:#0c0c0c;"></div>
<div class="b" style="left:484.20px;top:435.90px;width:922.85px;height:438.10px;background:#fff;background-image:conic-gradient(#cdcdcd 25%,#fff 0 50%,#cdcdcd 0 75%,#fff 0);background-size:12.1px 12.1px;background-position:0px 0px;"></div>
<svg class="b" style="left:484.2px;top:435.9px;overflow:hidden" width="922.85" height="438.1" viewBox="484.2 435.9 922.85 438.1">
<circle cx="537.5" cy="827.5" r="29.4" fill="#b3a310"/><circle cx="537.5" cy="827.5" r="26.2" fill="#d9c91e"/><path d="M513.1 830.5 A24.4 24.4 0 0 1 540.5 803.1" fill="none" stroke="#f0e56a" stroke-width="2" opacity="0.7"/>
<circle cx="708.6" cy="842.0" r="29.6" fill="#c07040"/><circle cx="708.6" cy="842.0" r="26.4" fill="#e18b56"/><path d="M684.0 845.0 A24.6 24.6 0 0 1 711.6 817.4" fill="none" stroke="#f2ab80" stroke-width="2" opacity="0.7"/>
<circle cx="916.6" cy="834.6" r="28.6" fill="#9a9a9a"/><circle cx="916.6" cy="834.6" r="25.4" fill="#b9b9b9"/><path d="M893.0 837.6 A23.6 23.6 0 0 1 919.6 811.0" fill="none" stroke="#dadada" stroke-width="2" opacity="0.7"/>
<path d="M592.6 810.4 L612.4 790.6 L661.2 790.6 L682.6 810.4 L637.6 859.0 Z" fill="#1a86ee" stroke="#1583ea" stroke-width="3" stroke-linejoin="round"/><path d="M592.6 810.4 L612.4 790.6 L621.4 810.4 Z" fill="#49b4ff"/><path d="M612.4 790.6 L661.2 790.6 L653.8 810.4 L621.4 810.4 Z" fill="#8fd6ff"/><path d="M612.4 790.6 L637.6 790.6 L621.4 810.4 Z" fill="#c4ecff"/><path d="M661.2 790.6 L682.6 810.4 L653.8 810.4 Z" fill="#49b4ff"/><path d="M621.4 810.4 L653.8 810.4 L637.6 859.0 Z" fill="#0c50c4"/><path d="M653.8 810.4 L682.6 810.4 L637.6 859.0 Z" fill="#0a63d6"/>
<path d="M1071.4 808.2 L1096.0 789.0 L1140.8 789.0 L1162.4 808.2 L1116.9 857.4 Z" fill="#0c9c16" stroke="#10b81c" stroke-width="3" stroke-linejoin="round"/><path d="M1071.4 808.2 L1096.0 789.0 L1100.5 808.2 Z" fill="#19be25"/><path d="M1096.0 789.0 L1140.8 789.0 L1133.3 808.2 L1100.5 808.2 Z" fill="#2fd43a"/><path d="M1096.0 789.0 L1116.9 789.0 L1100.5 808.2 Z" fill="#7df283"/><path d="M1140.8 789.0 L1162.4 808.2 L1133.3 808.2 Z" fill="#19be25"/><path d="M1100.5 808.2 L1133.3 808.2 L1116.9 857.4 Z" fill="#067a0e"/><path d="M1133.3 808.2 L1162.4 808.2 L1116.9 857.4 Z" fill="#0a8a12"/>
<path d="M1231.0 457.8 L1251.0 437.6 L1301.6 437.6 L1321.6 457.8 L1276.3 506.4 Z" fill="#d81420" stroke="#e8202a" stroke-width="3" stroke-linejoin="round"/><path d="M1231.0 457.8 L1251.0 437.6 L1260.0 457.8 Z" fill="#e63540"/><path d="M1251.0 437.6 L1301.6 437.6 L1292.6 457.8 L1260.0 457.8 Z" fill="#f0606a"/><path d="M1251.0 437.6 L1276.3 437.6 L1260.0 457.8 Z" fill="#ffb4ba"/><path d="M1301.6 437.6 L1321.6 457.8 L1292.6 457.8 Z" fill="#e63540"/><path d="M1260.0 457.8 L1292.6 457.8 L1276.3 506.4 Z" fill="#c8101a"/><path d="M1292.6 457.8 L1321.6 457.8 L1276.3 506.4 Z" fill="#b80c16"/>
<path d="M894.4 615.2 V662.4 Q894.4 665.4 900.2 665.4 Q906.0 665.4 906.0 662.4 V615.2 Z" fill="#e6da2a" stroke="#7d7508" stroke-width="2.6" stroke-linejoin="round"/><path d="M906.0 640.6 H917.4 L921.4 644.6 V649.2 H911.0 V653.2 H921.4 V660.0 H906.0 Z" fill="#e6da2a" stroke="#7d7508" stroke-width="2.6" stroke-linejoin="round"/><ellipse cx="900.4" cy="603.0" rx="21.2" ry="16.2" fill="#e6da2a" stroke="#7d7508" stroke-width="2.6"/><path d="M884.2 604.0 A16.2 11.2 0 0 1 905.4 592.0" fill="none" stroke="#faf690" stroke-width="2.4" opacity="0.7" stroke-linecap="round"/><path d="M897.8 619.2 V661.4" stroke="#faf690" stroke-width="2" opacity="0.65"/><ellipse cx="900.4" cy="595.6" rx="4.6" ry="3.6" fill="#f6f6f0" stroke="#7d7508" stroke-width="1.8"/>
<path d="M964.2 824.2 V866.0 Q964.2 869.0 970.1 869.0 Q976.0 869.0 976.0 866.0 V824.2 Z" fill="#1f7fe8" stroke="#0a3f9c" stroke-width="2.6" stroke-linejoin="round"/><path d="M976.0 846.6 H987.0 L991.0 850.6 V854.1 H981.0 V857.6 H991.0 V863.4 H976.0 Z" fill="#1f7fe8" stroke="#0a3f9c" stroke-width="2.6" stroke-linejoin="round"/><ellipse cx="970.4" cy="809.6" rx="20.2" ry="18.6" fill="#1f7fe8" stroke="#0a3f9c" stroke-width="2.6"/><path d="M955.2 810.6 A15.2 13.6 0 0 1 975.4 796.2" fill="none" stroke="#7ec0ff" stroke-width="2.4" opacity="0.7" stroke-linecap="round"/><path d="M967.6 828.2 V865.0" stroke="#7ec0ff" stroke-width="2" opacity="0.65"/><ellipse cx="970.4" cy="800.2" rx="4.6" ry="3.6" fill="#f6f6f0" stroke="#0a3f9c" stroke-width="1.8"/>
<path d="M1037.0 820.0 V863.0 Q1037.0 866.0 1042.9 866.0 Q1048.8 866.0 1048.8 863.0 V820.0 Z" fill="#22c02c" stroke="#0a6a10" stroke-width="2.6" stroke-linejoin="round"/><path d="M1048.8 844.4 H1060.0 L1064.0 848.4 V851.4 H1053.8 V854.7 H1064.0 V860.0 H1048.8 Z" fill="#22c02c" stroke="#0a6a10" stroke-width="2.6" stroke-linejoin="round"/><ellipse cx="1042.3" cy="807.0" rx="21.2" ry="17.0" fill="#22c02c" stroke="#0a6a10" stroke-width="2.6"/><path d="M1026.1 808.0 A16.2 12.0 0 0 1 1047.3 795.2" fill="none" stroke="#84ec8a" stroke-width="2.4" opacity="0.7" stroke-linecap="round"/><path d="M1040.4 824.0 V862.0" stroke="#84ec8a" stroke-width="2" opacity="0.65"/><ellipse cx="1042.3" cy="796.6" rx="4.6" ry="3.6" fill="#f6f6f0" stroke="#0a6a10" stroke-width="1.8"/>
<path d="M1373.4 816.7 V857.4 Q1373.4 860.4 1379.1 860.4 Q1384.8 860.4 1384.8 857.4 V816.7 Z" fill="#e8382e" stroke="#8e100c" stroke-width="2.6" stroke-linejoin="round"/><path d="M1384.8 835.6 H1396.4 L1400.4 839.6 V844.0 H1389.8 V848.0 H1400.4 V854.6 H1384.8 Z" fill="#e8382e" stroke="#8e100c" stroke-width="2.6" stroke-linejoin="round"/><ellipse cx="1379.0" cy="801.4" rx="21.4" ry="19.3" fill="#e8382e" stroke="#8e100c" stroke-width="2.6"/><path d="M1362.6 802.4 A16.4 14.3 0 0 1 1384.0 787.3" fill="none" stroke="#ff9a90" stroke-width="2.4" opacity="0.7" stroke-linecap="round"/><path d="M1376.8 820.7 V856.4" stroke="#ff9a90" stroke-width="2" opacity="0.65"/><ellipse cx="1379.0" cy="791.4" rx="4.6" ry="3.6" fill="#f6f6f0" stroke="#8e100c" stroke-width="1.8"/>
<g transform="translate(480,430) scale(0.18868)"><path d="M370 600 C350 588 288 583 260 590 C232 597 205 625 200 640 C195 655 213 678 230 680 C247 682 275 653 300 650 C325 647 368 668 380 660 C392 652 390 612 370 600 Z" fill="#f4e0d1" stroke="#160c06" stroke-width="13.5" stroke-linejoin="round"/><path d="M640 590 C647 577 687 565 700 570 C713 575 727 607 720 620 C713 633 673 655 660 650 C647 645 633 603 640 590 Z" fill="#f4e0d1" stroke="#160c06" stroke-width="13.5" stroke-linejoin="round"/><path d="M375 790 C388 782 416 785 440 780 C464 775 498 769 520 760 C542 751 560 725 575 725 C590 725 608 749 612 760 C616 771 609 780 600 792 C591 804 580 822 560 832 C540 842 507 849 480 852 C453 855 419 856 400 852 C381 848 369 835 365 825 C361 815 362 798 375 790 Z" fill="#234389" stroke="#160c06" stroke-width="13.5" stroke-linejoin="round"/><path d="M372 598 C384 595 404 603 420 610 C436 617 450 633 470 640 C490 647 521 642 540 650 C559 658 577 676 582 690 C587 704 580 720 570 732 C560 744 542 754 520 762 C498 770 461 777 440 782 C419 787 407 806 395 792 C383 778 378 727 370 700 C362 673 345 647 345 630 C345 613 360 601 372 598 Z" fill="#74b033" stroke="#160c06" stroke-width="13.5" stroke-linejoin="round"/><path d="M430 680 Q470 720 520 700" fill="none" stroke="#4f8420" stroke-width="8.1" stroke-linecap="round" stroke-linejoin="round"/><path d="M360 870 L490 850 L500 900 L370 915 Z" fill="#77777b" stroke="#160c06" stroke-width="12.15" stroke-linejoin="round"/><path d="M560 765 L680 745 L690 790 L565 805 Z" fill="#77777b" stroke="#160c06" stroke-width="12.15" stroke-linejoin="round"/><path d="M390 927 C413 913 464 899 490 912 C516 925 493 947 500 982 C507 1017 525 1035 520 1062 C515 1089 524 1086 480 1097 C436 1108 377 1119 330 1107 C283 1095 287 1075 280 1047 C273 1019 274 1004 300 987 C326 970 369 986 390 972 C411 958 367 941 390 927 Z" fill="#32302d" stroke="#160c06" stroke-width="17.55" stroke-linejoin="round"/><path d="M390 905 C413 891 464 877 490 890 C516 903 493 925 500 960 C507 995 525 1013 520 1040 C515 1067 524 1064 480 1075 C436 1086 377 1097 330 1085 C283 1073 287 1053 280 1025 C273 997 274 982 300 965 C326 948 369 964 390 950 C411 936 367 919 390 905 Z" fill="#aa7439" stroke="#160c06" stroke-width="13.5" stroke-linejoin="round"/><path d="M570 822 C599 799 651 799 680 807 C709 815 674 842 695 857 C716 872 749 852 770 872 C791 892 792 918 785 942 C778 966 792 969 740 977 C688 985 603 993 560 977 C517 961 553 943 555 907 C557 871 541 845 570 822 Z" fill="#32302d" stroke="#160c06" stroke-width="17.55" stroke-linejoin="round"/><path d="M570 800 C599 777 651 777 680 785 C709 793 674 820 695 835 C716 850 749 830 770 850 C791 870 792 896 785 920 C778 944 792 947 740 955 C688 963 603 971 560 955 C517 939 553 921 555 885 C557 849 541 823 570 800 Z" fill="#aa7439" stroke="#160c06" stroke-width="13.5" stroke-linejoin="round"/><path d="M45 700 C55 680 89 672 120 670 C151 668 204 678 230 690 C256 702 273 733 275 745 C277 757 252 764 240 760 C228 756 212 715 200 720 C188 725 183 777 170 790 C157 803 138 800 120 800 C102 800 72 807 60 790 C48 773 35 720 45 700 Z" fill="#f4e0d1" stroke="#160c06" stroke-width="13.5" stroke-linejoin="round"/><path d="M100 705 L72 785 M150 705 L125 795 M195 710 L172 790" fill="none" stroke="#160c06" stroke-width="9.45" stroke-linecap="round" stroke-linejoin="round"/><path d="M95 650 C105 636 173 615 200 615 C227 615 247 638 255 650 C263 662 269 682 250 690 C231 698 166 707 140 700 C114 693 85 664 95 650 Z" fill="#1f1f1f" stroke="#160c06" stroke-width="10.8" stroke-linejoin="round"/><path d="M215 610 L255 625 L270 665 L235 670 Z" fill="#77777b" stroke="#160c06" stroke-width="10.8" stroke-linejoin="round"/><path d="M760 650 C770 637 812 645 830 660 C848 675 865 718 870 740 C875 762 872 783 860 790 C848 797 815 788 800 780 C785 772 777 762 770 740 C763 718 750 663 760 650 Z" fill="#f4e0d1" stroke="#160c06" stroke-width="13.5" stroke-linejoin="round"/><path d="M800 700 L810 775 M835 700 L845 780" fill="none" stroke="#160c06" stroke-width="9.45" stroke-linecap="round" stroke-linejoin="round"/><path d="M700 590 C703 577 735 568 760 580 C785 592 833 640 850 660 C867 680 870 695 860 700 C850 705 810 697 790 690 C770 683 755 677 740 660 C725 643 697 603 700 590 Z" fill="#1f1f1f" stroke="#160c06" stroke-width="10.8" stroke-linejoin="round"/><path d="M685 570 L720 560 L745 640 L705 660 Z" fill="#77777b" stroke="#160c06" stroke-width="10.8" stroke-linejoin="round"/><path d="M262 420 C271 412 288 405 300 410 C312 415 327 432 332 450 C337 468 335 504 330 520 C325 536 311 547 300 545 C289 543 271 524 262 510 C253 496 248 475 248 460 C248 445 253 428 262 420 Z" fill="#f4e0d1" stroke="#160c06" stroke-width="13.5" stroke-linejoin="round"/><path d="M440 310 C472 296 520 290 560 300 C600 310 618 332 640 360 C662 388 668 404 672 440 C676 476 674 504 660 540 C646 576 628 600 600 620 C572 640 550 644 520 642 C490 640 474 628 450 612 C426 596 422 580 400 562 C378 544 354 546 340 522 C326 498 324 456 330 440 C336 424 356 454 370 440 C384 426 386 396 400 370 C414 344 408 324 440 310 Z" fill="#f4e0d1" stroke="#160c06" stroke-width="14.85" stroke-linejoin="round"/><path d="M340 522 C348 537 382 547 400 562 C418 577 430 599 450 612 C470 625 502 639 520 642 C538 645 568 642 560 632 C552 622 497 599 470 580 C443 561 420 538 400 520 C380 502 360 470 350 470 C340 470 332 507 340 522 Z" fill="#e3c9b8"/><path d="M545 440 Q535 540 560 585 M430 560 Q520 625 600 590" fill="none" stroke="#160c06" stroke-width="9.45" stroke-linecap="round" stroke-linejoin="round"/><path d="M175 400 C171 385 186 334 190 320 C194 306 209 267 215 265 C221 263 242 304 250 300 C258 296 286 231 300 220 C314 209 373 192 390 190 C407 188 456 207 470 200 C484 193 530 136 530 120 C530 104 467 50 470 45 C473 40 545 64 560 70 C575 76 612 110 620 110 C628 110 633 69 640 75 C647 81 685 152 690 170 C695 188 695 242 690 260 C685 278 649 342 640 350 C631 358 608 345 600 340 C592 335 573 305 560 300 C547 295 482 287 470 290 C458 293 447 322 440 330 C433 338 407 359 400 370 C393 381 378 432 370 440 C362 448 328 452 320 450 C312 448 296 424 290 420 C284 416 266 405 260 410 C254 415 238 471 230 470 C222 469 179 415 175 400 Z" fill="#a6330a" stroke="#5a1803" stroke-width="9.45" stroke-linejoin="round"/><ellipse cx="456" cy="455" rx="66" ry="106" fill="#ffffff" stroke="#160c06" stroke-width="13.5" transform="rotate(18 456 455)"/><ellipse cx="482" cy="500" rx="30" ry="46" fill="#0a0a0a" transform="rotate(18 482 500)"/><ellipse cx="615" cy="462" rx="54" ry="96" fill="#ffffff" stroke="#160c06" stroke-width="13.5" transform="rotate(8 615 462)"/><ellipse cx="634" cy="495" rx="29" ry="44" fill="#0a0a0a" transform="rotate(8 634 495)"/></g>
<g transform="translate(630,430) scale(0.18868)"><path d="M190 520 C207 516 283 546 300 560 C317 574 307 601 290 605 C273 609 217 599 200 585 C183 571 173 524 190 520 Z" fill="#f4e0d1" stroke="#160c06" stroke-width="13.5" stroke-linejoin="round"/><path d="M520 550 C530 536 588 532 600 540 C612 548 600 586 590 600 C580 614 552 633 540 625 C528 617 510 564 520 550 Z" fill="#f4e0d1" stroke="#160c06" stroke-width="13.5" stroke-linejoin="round"/><path d="M640 605 C650 589 691 582 700 595 C709 608 702 664 692 680 C682 696 649 704 640 692 C631 680 630 621 640 605 Z" fill="#f4e0d1" stroke="#160c06" stroke-width="13.5" stroke-linejoin="round"/><path d="M600 500 C612 476 670 463 690 470 C710 477 720 518 722 540 C724 562 717 588 700 600 C683 612 637 629 620 612 C603 595 588 524 600 500 Z" fill="#1f1f1f" stroke="#160c06" stroke-width="12.15" stroke-linejoin="round"/><path d="M440 785 L505 790 L500 830 L445 830 Z" fill="#f4e0d1" stroke="#160c06" stroke-width="12.15" stroke-linejoin="round"/><path d="M320 720 C342 717 393 743 430 740 C467 737 520 696 540 700 C560 704 569 747 552 762 C535 777 465 785 440 792 C415 799 418 804 400 802 C382 800 347 789 330 782 C313 775 302 770 300 760 C298 750 298 723 320 720 Z" fill="#234389" stroke="#160c06" stroke-width="13.5" stroke-linejoin="round"/><path d="M300 540 C323 520 393 480 430 480 C467 480 502 503 520 540 C538 577 555 666 540 700 C525 734 467 738 430 742 C393 746 343 746 320 722 C297 698 293 630 290 600 C287 570 277 560 300 540 Z" fill="#74b033" stroke="#160c06" stroke-width="13.5" stroke-linejoin="round"/><path d="M157 760 C178 732 209 726 237 730 C265 736 272 757 277 780 C282 805 250 800 257 832 C264 866 302 886 307 920 C312 956 298 966 277 982 C256 1000 247 1023 217 992 C187 963 161 907 147 852 C133 799 136 789 157 760 Z" fill="#32302d" stroke="#160c06" stroke-width="17.55" stroke-linejoin="round"/><path d="M150 740 C171 712 202 705 230 710 C258 715 265 736 270 760 C275 784 243 779 250 812 C257 845 295 865 300 900 C305 935 291 945 270 962 C249 979 240 1002 210 972 C180 942 154 886 140 832 C126 778 129 768 150 740 Z" fill="#aa7439" stroke="#160c06" stroke-width="13.5" stroke-linejoin="round"/><path d="M250 770 C250 751 281 746 300 758 C319 770 362 821 362 840 C362 859 319 884 300 872 C281 860 250 789 250 770 Z" fill="#77777b" stroke="#160c06" stroke-width="12.15" stroke-linejoin="round"/><path d="M425 830 C447 818 536 805 560 810 C584 815 588 850 566 862 C544 874 454 887 430 882 C406 877 403 842 425 830 Z" fill="#77777b" stroke="#160c06" stroke-width="12.15" stroke-linejoin="round"/><path d="M434 893 C462 877 523 851 554 881 C586 911 580 979 570 1021 C561 1064 556 1056 514 1063 C473 1071 424 1067 394 1053 C365 1039 379 1027 388 1003 C398 979 424 977 434 951 C445 926 406 910 434 893 Z" fill="#32302d" stroke="#160c06" stroke-width="17.55" stroke-linejoin="round"/><path d="M440 872 C468 856 528 830 560 860 C592 890 585 958 576 1000 C567 1042 561 1035 520 1042 C479 1049 429 1046 400 1032 C371 1018 385 1006 394 982 C403 958 429 956 440 930 C451 904 412 888 440 872 Z" fill="#aa7439" stroke="#160c06" stroke-width="13.5" stroke-linejoin="round"/><path d="M160 520 L205 510 L215 565 L172 575 Z" fill="#77777b" stroke="#160c06" stroke-width="10.8" stroke-linejoin="round"/><path d="M40 370 C48 354 82 346 100 350 C118 354 108 380 130 390 C152 400 196 388 210 400 C224 412 212 436 200 450 C188 464 160 456 150 470 C140 484 162 510 150 520 C138 530 108 540 90 522 C72 504 70 460 60 430 C50 400 32 386 40 370 Z" fill="#1f1f1f" stroke="#160c06" stroke-width="12.15" stroke-linejoin="round"/><path d="M215 85 C261 67 348 56 420 60 C492 64 572 74 610 105 C648 136 632 176 630 230 C628 284 589 358 600 400 C611 442 690 438 690 460 C690 482 629 505 600 520 C571 535 561 547 530 540 C499 533 467 487 430 480 C393 473 359 489 330 500 C301 511 294 540 270 540 C246 540 224 511 200 500 C176 489 140 491 140 480 C140 469 202 473 200 440 C198 407 134 338 130 300 C126 262 173 256 180 230 C187 204 164 187 170 160 C176 133 169 103 215 85 Z" fill="#a6330a" stroke="#5a1803" stroke-width="9.45" stroke-linejoin="round"/><path d="M260 130 C290 110 368 98 420 100 C472 102 542 115 570 140 C598 165 590 217 585 250 C580 283 571 318 540 340 C509 362 443 382 400 380 C357 378 307 357 280 330 C253 303 243 253 240 220 C237 187 230 150 260 130 Z" fill="#b33b0c"/><path d="M210 270 C214 256 240 255 250 268 C260 281 274 325 272 350 C270 375 250 410 240 420 C230 430 216 422 214 410 C212 398 226 373 225 350 C224 327 206 284 210 270 Z" fill="#f4e0d1" stroke="#160c06" stroke-width="12.15" stroke-linejoin="round"/></g>
<g transform="translate(750,430) scale(0.18868)"><path d="M590 620 C595 605 628 601 640 610 C652 619 667 657 662 672 C657 687 622 711 610 702 C598 693 585 635 590 620 Z" fill="#f4e0d1" stroke="#160c06" stroke-width="13.5" stroke-linejoin="round"/><path d="M680 540 C690 520 733 541 742 560 C751 579 742 632 732 652 C722 672 689 701 680 682 C671 663 670 560 680 540 Z" fill="#1f1f1f" stroke="#160c06" stroke-width="12.15" stroke-linejoin="round"/><path d="M640 620 L690 612 L700 668 L650 680 Z" fill="#77777b" stroke="#160c06" stroke-width="10.8" stroke-linejoin="round"/><path d="M500 805 L560 805 L560 845 L500 845 Z" fill="#f4e0d1" stroke="#160c06" stroke-width="12.15" stroke-linejoin="round"/><path d="M330 690 C335 675 357 665 380 670 C403 675 437 708 470 720 C503 732 561 726 580 740 C599 754 599 790 582 802 C565 814 519 819 480 812 C441 805 375 782 350 762 C325 742 325 705 330 690 Z" fill="#234389" stroke="#160c06" stroke-width="13.5" stroke-linejoin="round"/><path d="M370 540 C390 527 433 517 470 520 C507 523 568 540 590 560 C612 580 604 610 602 640 C600 670 602 728 580 742 C558 756 503 734 470 722 C437 710 400 692 380 672 C360 652 352 622 350 600 C348 578 350 553 370 540 Z" fill="#74b033" stroke="#160c06" stroke-width="13.5" stroke-linejoin="round"/><path d="M173 660 C188 622 212 623 238 620 C265 618 282 629 288 650 C296 671 259 680 268 710 C278 741 324 747 328 780 C333 813 312 828 288 852 C265 876 254 899 228 882 C203 866 191 834 178 782 C166 730 160 698 173 660 Z" fill="#32302d" stroke="#160c06" stroke-width="17.55" stroke-linejoin="round"/><path d="M165 640 C179 602 203 602 230 600 C257 598 273 609 280 630 C287 651 251 660 260 690 C269 720 315 727 320 760 C325 793 303 808 280 832 C257 856 246 878 220 862 C194 846 183 814 170 762 C157 710 151 678 165 640 Z" fill="#aa7439" stroke="#160c06" stroke-width="13.5" stroke-linejoin="round"/><path d="M275 680 C278 660 307 647 320 660 C333 673 355 740 352 760 C349 780 313 795 300 782 C287 769 272 700 275 680 Z" fill="#77777b" stroke="#160c06" stroke-width="12.15" stroke-linejoin="round"/><path d="M470 840 C488 831 570 825 590 830 C610 835 610 863 592 872 C574 881 500 887 480 882 C460 877 452 849 470 840 Z" fill="#77777b" stroke="#160c06" stroke-width="12.15" stroke-linejoin="round"/><path d="M457 893 C496 872 554 864 587 891 C621 919 606 972 599 1011 C592 1052 593 1054 557 1063 C522 1074 479 1073 447 1053 C416 1035 420 1021 422 983 C425 947 419 915 457 893 Z" fill="#32302d" stroke="#160c06" stroke-width="17.55" stroke-linejoin="round"/><path d="M460 872 C498 851 557 842 590 870 C623 898 609 950 602 990 C595 1030 595 1032 560 1042 C525 1052 482 1051 450 1032 C418 1013 423 999 425 962 C427 925 422 893 460 872 Z" fill="#aa7439" stroke="#160c06" stroke-width="13.5" stroke-linejoin="round"/><path d="M45 180 C51 162 73 168 90 170 C107 172 112 190 130 192 C148 194 160 183 180 180 C200 177 222 163 232 175 C242 187 254 221 232 240 C210 259 144 246 120 272 C96 298 120 360 110 372 C100 384 80 354 70 332 C60 310 63 290 58 260 C53 230 39 198 45 180 Z" fill="#f4e0d1" stroke="#160c06" stroke-width="13.5" stroke-linejoin="round"/><path d="M115 265 C132 244 207 239 230 245 C253 251 257 280 252 300 C247 320 220 350 200 362 C180 374 144 388 130 372 C116 356 98 286 115 265 Z" fill="#1f1f1f" stroke="#160c06" stroke-width="12.15" stroke-linejoin="round"/><path d="M200 390 C210 378 273 363 290 370 C307 377 312 418 302 430 C292 442 247 449 230 442 C213 435 190 402 200 390 Z" fill="#f4e0d1" stroke="#160c06" stroke-width="12.15" stroke-linejoin="round"/><path d="M330 90 C357 68 398 52 460 70 C522 88 657 168 700 200 C743 232 723 223 720 260 C717 297 675 378 680 420 C685 462 757 490 750 510 C743 530 672 535 640 540 C608 545 588 543 560 540 C532 537 500 520 470 520 C440 520 410 537 380 540 C350 543 323 550 290 540 C257 530 185 497 180 480 C175 463 257 453 260 440 C263 427 212 417 200 400 C188 383 178 367 190 340 C202 313 252 263 270 240 C288 217 290 225 300 200 C310 175 303 112 330 90 Z" fill="#a6330a" stroke="#5a1803" stroke-width="9.45" stroke-linejoin="round"/><path d="M380 140 C402 120 423 105 470 120 C517 135 627 200 660 230 C693 260 677 275 670 300 C663 325 652 363 620 380 C588 397 520 407 480 400 C440 393 403 367 380 340 C357 313 340 273 340 240 C340 207 358 160 380 140 Z" fill="#b33b0c"/><path d="M320 280 C327 267 356 257 370 270 C384 283 405 333 402 360 C399 387 367 424 350 432 C333 440 303 424 300 410 C297 396 327 372 330 350 C333 328 313 293 320 280 Z" fill="#f4e0d1" stroke="#160c06" stroke-width="12.15" stroke-linejoin="round"/></g>
<g transform="translate(880,430) scale(0.18868)"><path d="M530 560 C542 546 578 523 600 520 C622 517 660 528 660 540 C660 552 622 582 600 592 C578 602 542 607 530 602 C518 597 518 574 530 560 Z" fill="#f4e0d1" stroke="#160c06" stroke-width="13.5" stroke-linejoin="round"/><path d="M230 540 C237 528 288 530 300 540 C312 550 309 588 302 600 C295 612 272 622 260 612 C248 602 223 552 230 540 Z" fill="#f4e0d1" stroke="#160c06" stroke-width="13.5" stroke-linejoin="round"/><path d="M120 600 C123 586 158 597 170 610 C182 623 195 666 192 680 C189 694 162 705 150 692 C138 679 117 614 120 600 Z" fill="#f4e0d1" stroke="#160c06" stroke-width="12.15" stroke-linejoin="round"/><path d="M110 470 C122 455 180 483 200 500 C220 517 232 551 232 570 C232 589 217 608 200 612 C183 616 145 616 130 592 C115 568 98 485 110 470 Z" fill="#1f1f1f" stroke="#160c06" stroke-width="12.15" stroke-linejoin="round"/><path d="M290 700 C312 695 365 720 400 720 C435 720 476 690 500 700 C524 710 552 761 542 780 C532 799 467 810 440 812 C413 814 405 797 380 792 C355 787 308 789 290 782 C272 775 270 764 270 750 C270 736 268 705 290 700 Z" fill="#234389" stroke="#160c06" stroke-width="13.5" stroke-linejoin="round"/><path d="M320 530 C340 508 397 478 430 480 C463 482 507 520 520 540 C533 560 513 573 510 600 C507 627 518 680 500 700 C482 720 433 722 400 722 C367 722 315 721 300 702 C285 683 307 639 310 610 C313 581 300 552 320 530 Z" fill="#74b033" stroke="#160c06" stroke-width="13.5" stroke-linejoin="round"/><path d="M544 761 C556 738 589 727 624 731 C660 736 682 742 696 781 C711 821 699 854 686 901 C675 949 669 962 644 983 C621 1005 613 1013 584 993 C557 974 527 939 524 901 C522 864 570 864 574 831 C579 799 533 785 544 761 Z" fill="#32302d" stroke="#160c06" stroke-width="17.55" stroke-linejoin="round"/><path d="M540 740 C552 717 585 705 620 710 C655 715 678 720 692 760 C706 800 694 833 682 880 C670 927 664 941 640 962 C616 983 608 991 580 972 C552 953 522 918 520 880 C518 842 565 843 570 810 C575 777 528 763 540 740 Z" fill="#aa7439" stroke="#160c06" stroke-width="13.5" stroke-linejoin="round"/><path d="M470 820 C475 805 521 773 540 770 C559 767 587 785 582 800 C577 815 529 859 510 862 C491 865 465 835 470 820 Z" fill="#77777b" stroke="#160c06" stroke-width="12.15" stroke-linejoin="round"/><path d="M260 820 C282 810 376 803 400 810 C424 817 424 852 402 862 C380 872 289 874 265 867 C241 860 238 830 260 820 Z" fill="#77777b" stroke="#160c06" stroke-width="12.15" stroke-linejoin="round"/><path d="M281 883 C314 853 363 863 391 878 C419 895 389 911 401 951 C413 993 471 1030 443 1053 C415 1078 326 1064 281 1053 C236 1044 251 1052 251 1011 C251 972 249 915 281 883 Z" fill="#32302d" stroke="#160c06" stroke-width="17.55" stroke-linejoin="round"/><path d="M280 862 C313 831 362 841 390 857 C418 873 388 889 400 930 C412 971 470 1008 442 1032 C414 1056 325 1042 280 1032 C235 1022 250 1030 250 990 C250 950 247 893 280 862 Z" fill="#aa7439" stroke="#160c06" stroke-width="13.5" stroke-linejoin="round"/><path d="M630 510 L670 505 L680 565 L640 572 Z" fill="#77777b" stroke="#160c06" stroke-width="10.8" stroke-linejoin="round"/><path d="M610 380 C626 362 668 354 700 350 C732 346 752 348 770 360 C788 372 796 394 792 410 C788 426 760 418 750 440 C740 462 760 504 742 520 C724 536 684 538 660 522 C636 506 630 468 620 440 C610 412 594 398 610 380 Z" fill="#1f1f1f" stroke="#160c06" stroke-width="12.15" stroke-linejoin="round"/><path d="M210 120 C241 92 330 58 400 55 C470 52 591 68 630 100 C669 132 637 197 632 250 C627 303 612 383 600 420 C588 457 562 452 560 470 C558 488 597 522 590 530 C583 538 547 528 520 520 C493 512 462 480 430 480 C398 480 363 510 330 520 C297 530 263 548 230 540 C197 532 128 490 130 470 C132 450 227 443 240 420 C253 397 214 363 210 330 C206 297 215 255 215 220 C215 185 179 148 210 120 Z" fill="#a6330a" stroke="#5a1803" stroke-width="9.45" stroke-linejoin="round"/><path d="M270 150 C295 127 358 102 410 100 C462 98 551 113 580 140 C609 167 592 225 585 260 C578 295 571 328 540 350 C509 372 442 392 400 390 C358 388 313 365 290 340 C267 315 263 272 260 240 C257 208 245 173 270 150 Z" fill="#b33b0c"/><path d="M580 270 C592 256 616 246 620 268 C624 290 610 376 602 400 C594 424 579 420 570 412 C561 404 548 374 550 350 C552 326 568 284 580 270 Z" fill="#f4e0d1" stroke="#160c06" stroke-width="12.15" stroke-linejoin="round"/></g>
<g transform="translate(1010,430) scale(0.18868)"><path d="M590 400 C592 385 625 345 640 340 C655 335 684 355 682 370 C680 385 645 427 630 432 C615 437 588 415 590 400 Z" fill="#f4e0d1" stroke="#160c06" stroke-width="13.5" stroke-linejoin="round"/><path d="M630 160 C635 148 670 153 680 165 C690 177 697 218 692 230 C687 242 660 249 650 237 C640 225 625 172 630 160 Z" fill="#f4e0d1" stroke="#160c06" stroke-width="12.15" stroke-linejoin="round"/><path d="M740 170 C750 155 795 145 810 150 C825 155 837 181 832 200 C827 219 794 255 780 262 C766 269 757 255 750 240 C743 225 730 185 740 170 Z" fill="#f4e0d1" stroke="#160c06" stroke-width="12.15" stroke-linejoin="round"/><path d="M620 260 C622 245 630 233 650 230 C670 227 721 230 740 240 C759 250 762 271 762 290 C762 309 754 342 740 352 C726 362 697 357 680 352 C663 347 650 335 640 320 C630 305 618 275 620 260 Z" fill="#1f1f1f" stroke="#160c06" stroke-width="12.15" stroke-linejoin="round"/><path d="M620 340 L690 335 L695 382 L625 388 Z" fill="#77777b" stroke="#160c06" stroke-width="10.8" stroke-linejoin="round"/><path d="M200 620 C210 605 273 593 290 600 C307 607 312 645 302 660 C292 675 247 699 230 692 C213 685 190 635 200 620 Z" fill="#f4e0d1" stroke="#160c06" stroke-width="13.5" stroke-linejoin="round"/><path d="M130 530 C140 520 178 528 200 540 C222 552 262 583 262 600 C262 617 220 642 200 642 C180 642 152 621 140 602 C128 583 120 540 130 530 Z" fill="#1f1f1f" stroke="#160c06" stroke-width="12.15" stroke-linejoin="round"/><path d="M175 600 L240 590 L252 640 L190 652 Z" fill="#77777b" stroke="#160c06" stroke-width="10.8" stroke-linejoin="round"/><path d="M310 795 L370 795 L372 835 L312 835 Z" fill="#f4e0d1" stroke="#160c06" stroke-width="12.15" stroke-linejoin="round"/><path d="M290 720 C320 705 440 697 480 700 C520 703 545 725 532 740 C519 755 439 783 400 792 C361 801 318 804 300 792 C282 780 260 735 290 720 Z" fill="#234389" stroke="#160c06" stroke-width="13.5" stroke-linejoin="round"/><path d="M290 560 C307 537 362 503 400 500 C438 497 503 517 520 540 C537 563 507 613 500 640 C493 667 500 688 480 702 C460 716 410 719 380 722 C350 725 313 736 300 722 C287 708 302 667 300 640 C298 613 273 583 290 560 Z" fill="#74b033" stroke="#160c06" stroke-width="13.5" stroke-linejoin="round"/><path d="M592 611 C605 584 624 587 652 591 C681 596 698 597 714 631 C732 667 730 697 724 741 C720 787 712 795 692 823 C674 852 666 861 642 863 C620 866 616 852 592 833 C570 815 541 812 542 783 C545 755 591 752 602 711 C615 672 581 640 592 611 Z" fill="#32302d" stroke="#160c06" stroke-width="17.55" stroke-linejoin="round"/><path d="M590 590 C602 562 622 565 650 570 C678 575 695 575 712 610 C729 645 727 675 722 720 C717 765 709 774 690 802 C671 830 663 840 640 842 C617 844 613 831 590 812 C567 793 538 790 540 762 C542 734 588 730 600 690 C612 650 578 618 590 590 Z" fill="#aa7439" stroke="#160c06" stroke-width="13.5" stroke-linejoin="round"/><path d="M540 650 C548 633 580 632 590 640 C600 648 610 683 602 700 C594 717 550 750 540 742 C530 734 532 667 540 650 Z" fill="#77777b" stroke="#160c06" stroke-width="12.15" stroke-linejoin="round"/><path d="M275 820 C293 811 370 807 390 815 C410 823 414 858 396 867 C378 876 300 875 280 867 C260 859 257 829 275 820 Z" fill="#77777b" stroke="#160c06" stroke-width="12.15" stroke-linejoin="round"/><path d="M293 883 C324 853 368 873 403 881 C439 891 438 891 445 921 C453 952 448 981 435 1011 C423 1043 427 1044 393 1053 C360 1064 321 1064 293 1053 C265 1044 273 1051 273 1011 C273 972 263 914 293 883 Z" fill="#32302d" stroke="#160c06" stroke-width="17.55" stroke-linejoin="round"/><path d="M290 862 C320 832 365 851 400 860 C435 869 435 870 442 900 C449 930 444 959 432 990 C420 1021 423 1022 390 1032 C357 1042 318 1042 290 1032 C262 1022 270 1030 270 990 C270 950 260 892 290 862 Z" fill="#aa7439" stroke="#160c06" stroke-width="13.5" stroke-linejoin="round"/><path d="M150 200 C182 163 285 103 350 80 C415 57 503 48 540 60 C577 72 569 118 572 150 C575 182 569 225 560 250 C551 275 520 275 520 300 C520 325 533 373 560 400 C587 427 677 443 680 460 C683 477 613 488 580 500 C547 512 510 530 480 530 C450 530 430 498 400 500 C370 502 333 533 300 540 C267 547 230 548 200 540 C170 532 113 510 120 495 C127 480 227 469 240 450 C253 431 213 405 200 380 C187 355 168 330 160 300 C152 270 118 237 150 200 Z" fill="#a6330a" stroke="#5a1803" stroke-width="9.45" stroke-linejoin="round"/><path d="M230 200 C255 170 323 137 370 120 C417 103 483 87 510 100 C537 113 535 163 530 200 C525 237 502 287 480 320 C458 353 432 390 400 400 C368 410 320 397 290 380 C260 363 230 330 220 300 C210 270 205 230 230 200 Z" fill="#b33b0c"/><path d="M510 260 C522 245 538 233 550 250 C562 267 580 335 582 360 C584 385 572 395 560 402 C548 409 523 412 510 402 C497 392 480 364 480 340 C480 316 498 275 510 260 Z" fill="#f4e0d1" stroke="#160c06" stroke-width="12.15" stroke-linejoin="round"/></g>
<g transform="translate(1150,450) scale(0.19728)"><path d="M20 530 C29 524 132 512 150 515 C168 518 192 552 200 560 C208 568 239 586 232 590 C225 594 147 603 130 602 C113 601 71 587 60 580 C49 573 11 536 20 530 Z" fill="#a6330a" stroke="#5a1803" stroke-width="8.1" stroke-linejoin="round"/><path d="M400 600 C402 592 438 545 450 540 C462 535 517 544 520 550 C523 556 489 593 480 600 C471 607 438 622 430 622 C422 622 398 608 400 600 Z" fill="#a6330a" stroke="#5a1803" stroke-width="8.1" stroke-linejoin="round"/><path d="M380 760 C387 747 410 783 420 800 C430 817 445 840 442 860 C439 880 411 919 400 922 C389 925 381 907 378 880 C375 853 373 773 380 760 Z" fill="#f4e0d1" stroke="#160c06" stroke-width="12.15" stroke-linejoin="round"/><path d="M217 973 C246 950 276 925 317 913 C360 902 358 909 397 923 C437 937 466 948 487 973 C509 999 511 1009 489 1033 C469 1057 463 1065 397 1075 C332 1085 254 1090 207 1075 C161 1061 195 1037 197 1013 C200 989 190 997 217 973 Z" fill="#32302d" stroke="#160c06" stroke-width="17.55" stroke-linejoin="round"/><path d="M200 960 C228 937 258 912 300 900 C342 888 340 896 380 910 C420 924 449 934 470 960 C491 986 493 996 472 1020 C451 1044 446 1052 380 1062 C314 1072 237 1076 190 1062 C143 1048 178 1024 180 1000 C182 976 172 983 200 960 Z" fill="#aa7439" stroke="#160c06" stroke-width="13.5" stroke-linejoin="round"/><path d="M280 850 L390 850 L392 902 L282 902 Z" fill="#77777b" stroke="#160c06" stroke-width="10.8" stroke-linejoin="round"/><path d="M250 780 C267 770 348 770 370 780 C392 790 399 832 382 842 C365 852 292 852 270 842 C248 832 233 790 250 780 Z" fill="#234389" stroke="#160c06" stroke-width="12.15" stroke-linejoin="round"/><path d="M240 580 L300 600 L302 645 L250 632 Z" fill="#f4e0d1" stroke="#160c06" stroke-width="12.15" stroke-linejoin="round"/><path d="M180 620 C193 605 230 606 250 610 C270 614 283 642 300 645 C317 648 336 624 350 630 C364 636 378 655 382 680 C386 705 394 765 372 782 C350 799 275 789 250 782 C225 775 233 754 220 740 C207 726 177 720 170 700 C163 680 167 635 180 620 Z" fill="#74b033" stroke="#160c06" stroke-width="13.5" stroke-linejoin="round"/><path d="M170 690 L215 690 L217 762 L170 762 Z" fill="#f4e0d1" stroke="#160c06" stroke-width="12.15" stroke-linejoin="round"/><path d="M85 880 C112 870 240 852 270 860 C300 868 272 916 262 930 C252 944 235 943 210 942 C185 941 131 932 110 922 C89 912 58 890 85 880 Z" fill="#f4e0d1" stroke="#160c06" stroke-width="13.5" stroke-linejoin="round"/><path d="M135 790 C150 776 219 778 240 790 C261 802 277 846 262 860 C247 874 171 884 150 872 C129 860 120 804 135 790 Z" fill="#1f1f1f" stroke="#160c06" stroke-width="12.15" stroke-linejoin="round"/><path d="M135 755 L235 755 L237 792 L135 792 Z" fill="#77777b" stroke="#160c06" stroke-width="10.8" stroke-linejoin="round"/><path d="M280 200 C296 202 306 284 330 300 C354 316 378 282 400 280 C422 278 426 262 440 290 C454 318 470 374 472 420 C474 466 464 486 450 520 C436 554 424 574 400 590 C376 606 360 608 330 602 C300 596 280 580 250 560 C220 540 200 518 180 500 C160 482 166 474 150 470 C134 466 116 492 100 482 C84 472 70 440 68 420 C66 400 74 380 90 380 C106 380 128 422 150 420 C172 418 180 396 200 370 C220 344 234 324 250 290 C266 256 264 198 280 200 Z" fill="#f4e0d1" stroke="#160c06" stroke-width="14.85" stroke-linejoin="round"/><path d="M180 500 C183 513 225 543 250 560 C275 577 307 597 330 602 C353 607 395 602 390 592 C385 582 327 559 300 540 C273 521 250 487 230 480 C210 473 177 487 180 500 Z" fill="#e3c9b8"/><path d="M80 250 C99 228 243 168 280 160 C317 152 430 155 450 165 C470 175 466 236 480 260 C494 284 586 388 590 400 C594 412 522 372 520 380 C518 388 574 478 570 480 C566 482 493 419 480 400 C467 381 448 302 440 290 C432 278 411 279 400 280 C389 281 342 308 330 300 C318 292 288 201 280 200 C272 199 258 273 250 290 C242 307 210 357 200 370 C190 383 161 419 150 420 C139 421 97 397 90 380 C83 363 61 272 80 250 Z" fill="#a6330a" stroke="#5a1803" stroke-width="9.45" stroke-linejoin="round"/><ellipse cx="265" cy="380" rx="68" ry="98" fill="#ffffff" stroke="#160c06" stroke-width="13.5" transform="rotate(8 265 380)"/><ellipse cx="295" cy="390" rx="22" ry="45" fill="#0a0a0a" transform="rotate(8 295 390)"/><ellipse cx="415" cy="380" rx="53" ry="93" fill="#ffffff" stroke="#160c06" stroke-width="13.5" transform="rotate(5 415 380)"/><ellipse cx="445" cy="380" rx="15" ry="40" fill="#0a0a0a" transform="rotate(5 445 380)"/></g>
<g transform="translate(1150,450) scale(0.19728)"><path d="M630 480 C634 472 707 456 720 460 C733 464 758 507 760 520 C762 533 749 582 742 590 C735 598 696 607 690 602 C684 597 686 552 680 540 C674 528 626 488 630 480 Z" fill="#a6330a" stroke="#5a1803" stroke-width="8.1" stroke-linejoin="round"/><path d="M620 640 C637 625 716 607 740 610 C764 613 779 645 762 660 C745 675 664 705 640 702 C616 699 603 655 620 640 Z" fill="#f4e0d1" stroke="#160c06" stroke-width="13.5" stroke-linejoin="round"/><path d="M580 959 C613 941 659 935 710 939 C762 944 784 951 800 979 C818 1007 799 1031 782 1059 C766 1088 766 1091 730 1101 C695 1111 668 1120 630 1101 C593 1082 582 1052 570 1019 C559 986 548 978 580 959 Z" fill="#32302d" stroke="#160c06" stroke-width="17.55" stroke-linejoin="round"/><path d="M570 940 C603 921 649 915 700 920 C751 925 773 932 790 960 C807 988 788 1012 772 1040 C756 1068 755 1072 720 1082 C685 1092 657 1101 620 1082 C583 1063 572 1033 560 1000 C548 967 537 959 570 940 Z" fill="#aa7439" stroke="#160c06" stroke-width="13.5" stroke-linejoin="round"/><path d="M690 880 C705 873 773 886 790 900 C807 914 807 955 792 962 C777 969 717 956 700 942 C683 928 675 887 690 880 Z" fill="#77777b" stroke="#160c06" stroke-width="12.15" stroke-linejoin="round"/><path d="M740 840 C755 831 825 823 840 830 C855 837 847 873 832 882 C817 891 765 889 750 882 C735 875 725 849 740 840 Z" fill="#234389" stroke="#160c06" stroke-width="12.15" stroke-linejoin="round"/><path d="M912 878 C940 852 973 858 1012 848 C1052 839 1058 829 1082 838 C1106 848 1117 855 1114 888 C1112 921 1096 942 1072 980 C1048 1018 1038 1046 1012 1050 C987 1055 990 1021 962 1000 C934 979 904 989 892 960 C881 932 884 904 912 878 Z" fill="#32302d" stroke="#160c06" stroke-width="17.55" stroke-linejoin="round"/><path d="M900 860 C928 834 960 839 1000 830 C1040 821 1046 811 1070 820 C1094 829 1104 837 1102 870 C1100 903 1084 924 1060 962 C1036 1000 1026 1027 1000 1032 C974 1037 978 1003 950 982 C922 961 892 970 880 942 C868 914 872 886 900 860 Z" fill="#aa7439" stroke="#160c06" stroke-width="13.5" stroke-linejoin="round"/><path d="M850 840 C860 823 901 813 910 830 C919 847 912 925 902 942 C892 959 859 949 850 932 C841 915 840 857 850 840 Z" fill="#77777b" stroke="#160c06" stroke-width="12.15" stroke-linejoin="round"/><path d="M740 600 C742 582 778 580 800 590 C822 600 851 638 870 660 C889 682 907 696 912 720 C917 744 909 782 900 802 C891 822 875 842 860 842 C845 842 822 826 810 802 C798 778 802 734 790 700 C778 666 738 618 740 600 Z" fill="#74b033" stroke="#160c06" stroke-width="13.5" stroke-linejoin="round"/><path d="M650 720 C667 705 730 687 760 690 C790 693 823 716 832 740 C841 764 831 813 812 832 C793 851 745 860 720 852 C695 844 672 804 660 782 C648 760 633 735 650 720 Z" fill="#1f1f1f" stroke="#160c06" stroke-width="12.15" stroke-linejoin="round"/><path d="M620 690 L700 670 L712 722 L632 740 Z" fill="#77777b" stroke="#160c06" stroke-width="10.8" stroke-linejoin="round"/><path d="M1040 690 C1052 668 1111 675 1130 680 C1149 685 1152 700 1152 720 C1152 740 1147 787 1132 802 C1117 817 1075 831 1060 812 C1045 793 1028 712 1040 690 Z" fill="#f4e0d1" stroke="#160c06" stroke-width="13.5" stroke-linejoin="round"/><path d="M960 720 C968 700 1023 690 1040 700 C1057 710 1070 760 1062 780 C1054 800 1007 832 990 822 C973 812 952 740 960 720 Z" fill="#1f1f1f" stroke="#160c06" stroke-width="12.15" stroke-linejoin="round"/><path d="M1010 300 C1030 324 1042 420 1060 480 C1078 540 1094 566 1100 600 C1106 634 1112 632 1092 650 C1072 668 1034 690 1000 692 C966 694 950 680 920 662 C890 644 874 620 850 600 C826 580 818 572 800 560 C782 548 772 558 760 540 C748 522 738 494 738 470 C738 446 748 430 760 420 C772 410 784 408 800 420 C816 432 820 476 840 480 C860 484 876 464 900 440 C924 416 938 388 960 360 C982 332 990 276 1010 300 Z" fill="#f4e0d1" stroke="#160c06" stroke-width="14.85" stroke-linejoin="round"/><path d="M800 560 C798 570 830 583 850 600 C870 617 895 647 920 662 C945 677 980 690 1000 692 C1020 694 1050 688 1040 676 C1030 664 970 643 940 620 C910 597 883 550 860 540 C837 530 802 550 800 560 Z" fill="#e3c9b8"/><path d="M745 330 C750 316 824 286 850 280 C876 274 969 266 1000 270 C1031 274 1141 291 1160 320 C1179 349 1193 524 1190 560 C1187 596 1139 676 1130 680 C1121 684 1107 620 1100 600 C1093 580 1069 510 1060 480 C1051 450 1020 312 1010 300 C1000 288 971 346 960 360 C949 374 912 428 900 440 C888 452 850 482 840 480 C830 478 810 435 800 420 C790 405 740 344 745 330 Z" fill="#a6330a" stroke="#5a1803" stroke-width="9.45" stroke-linejoin="round"/><ellipse cx="980" cy="480" rx="73" ry="98" fill="#ffffff" stroke="#160c06" stroke-width="13.5" transform="rotate(12 980 480)"/><ellipse cx="1025" cy="470" rx="18" ry="45" fill="#0a0a0a" transform="rotate(12 1025 470)"/></g>
<g transform="translate(480,630) scale(0.18868)"><path d="M230 340 C229 331 288 266 300 260 C312 254 342 270 350 280 C358 290 386 353 382 360 C378 367 325 354 310 352 C295 350 231 349 230 340 Z" fill="#a6330a" stroke="#5a1803" stroke-width="8.1" stroke-linejoin="round"/><path d="M190 350 C192 342 215 342 240 350 C265 358 328 385 340 400 C352 415 328 442 310 442 C292 442 250 415 230 400 C210 385 188 358 190 350 Z" fill="#f4e0d1" stroke="#160c06" stroke-width="13.5" stroke-linejoin="round"/><path d="M132 671 C158 656 198 665 232 671 C268 679 276 676 282 701 C290 728 274 748 262 783 C251 819 254 828 232 853 C212 880 201 901 172 893 C145 887 124 859 112 823 C101 788 118 777 122 741 C127 706 107 688 132 671 Z" fill="#32302d" stroke="#160c06" stroke-width="17.55" stroke-linejoin="round"/><path d="M130 650 C156 634 195 643 230 650 C265 657 273 654 280 680 C287 706 272 727 260 762 C248 797 251 806 230 832 C209 858 198 879 170 872 C142 865 122 837 110 802 C98 767 115 755 120 720 C125 685 104 666 130 650 Z" fill="#aa7439" stroke="#160c06" stroke-width="13.5" stroke-linejoin="round"/><path d="M270 690 C279 680 307 695 312 710 C317 725 309 772 300 782 C291 792 265 787 260 772 C255 757 261 700 270 690 Z" fill="#77777b" stroke="#160c06" stroke-width="12.15" stroke-linejoin="round"/><path d="M280 550 C298 543 347 585 380 600 C413 615 472 623 480 640 C488 657 453 688 430 702 C407 716 367 732 340 722 C313 712 280 669 270 640 C260 611 262 557 280 550 Z" fill="#234389" stroke="#160c06" stroke-width="13.5" stroke-linejoin="round"/><path d="M408 811 C423 781 478 764 508 761 C539 759 518 804 538 801 C560 799 573 756 598 751 C625 747 641 758 650 781 C660 805 662 823 640 853 C619 884 594 890 558 913 C523 937 514 958 488 953 C463 949 467 927 448 893 C430 860 395 842 408 811 Z" fill="#32302d" stroke="#160c06" stroke-width="17.55" stroke-linejoin="round"/><path d="M390 800 C404 769 460 752 490 750 C520 748 499 792 520 790 C541 788 554 745 580 740 C606 735 622 746 632 770 C642 794 643 811 622 842 C601 873 575 879 540 902 C505 925 496 947 470 942 C444 937 449 915 430 882 C411 849 376 831 390 800 Z" fill="#aa7439" stroke="#160c06" stroke-width="13.5" stroke-linejoin="round"/><path d="M370 750 C385 733 458 700 480 700 C502 700 517 733 502 750 C487 767 412 802 390 802 C368 802 355 767 370 750 Z" fill="#77777b" stroke="#160c06" stroke-width="12.15" stroke-linejoin="round"/><path d="M340 390 C358 383 398 402 420 420 C442 438 447 477 470 500 C493 523 548 540 560 560 C572 580 553 608 540 622 C527 636 507 645 480 642 C453 639 412 619 380 602 C348 585 302 566 290 542 C278 518 302 485 310 460 C318 435 322 397 340 390 Z" fill="#74b033" stroke="#160c06" stroke-width="13.5" stroke-linejoin="round"/><path d="M80 460 C108 448 203 428 230 440 C257 452 249 506 242 530 C235 554 214 575 190 582 C166 589 122 584 100 572 C78 560 63 529 60 510 C57 491 52 472 80 460 Z" fill="#1f1f1f" stroke="#160c06" stroke-width="12.15" stroke-linejoin="round"/><path d="M130 400 C138 390 181 383 200 390 C219 397 250 430 242 440 C234 450 169 459 150 452 C131 445 122 410 130 400 Z" fill="#77777b" stroke="#160c06" stroke-width="10.8" stroke-linejoin="round"/><path d="M540 590 C543 580 582 618 600 620 C618 622 643 593 650 600 C657 607 654 646 642 660 C630 674 597 694 580 682 C563 670 537 600 540 590 Z" fill="#f4e0d1" stroke="#160c06" stroke-width="13.5" stroke-linejoin="round"/><path d="M700 500 C713 488 798 480 820 490 C842 500 833 535 832 560 C831 585 824 628 812 642 C800 656 772 656 760 642 C748 628 750 584 740 560 C730 536 687 512 700 500 Z" fill="#f4e0d1" stroke="#160c06" stroke-width="13.5" stroke-linejoin="round"/><path d="M660 530 C673 513 701 507 720 520 C739 533 767 586 772 610 C777 634 764 650 750 662 C736 674 708 689 690 682 C672 675 645 645 640 620 C635 595 647 547 660 530 Z" fill="#1f1f1f" stroke="#160c06" stroke-width="12.15" stroke-linejoin="round"/><path d="M620 90 C632 90 626 126 640 160 C654 194 670 222 690 260 C710 298 734 316 740 350 C746 384 740 402 722 430 C704 458 682 476 650 492 C618 508 594 522 560 512 C526 502 504 472 480 442 C456 412 456 382 440 360 C424 338 418 334 400 330 C382 326 366 356 350 342 C334 328 320 286 318 260 C316 234 328 224 340 210 C352 196 364 178 380 190 C396 202 396 260 420 270 C444 280 468 262 500 240 C532 218 556 190 580 160 C604 130 608 90 620 90 Z" fill="#f4e0d1" stroke="#160c06" stroke-width="14.85" stroke-linejoin="round"/><path d="M400 330 C395 335 427 341 440 360 C453 379 460 417 480 442 C500 467 538 502 560 512 C582 522 617 517 610 502 C603 487 543 449 520 420 C497 391 490 345 470 330 C450 315 405 325 400 330 Z" fill="#e3c9b8"/><path d="M380 90 C391 75 446 53 470 50 C494 47 589 58 620 60 C651 62 759 53 780 70 C801 87 821 208 830 230 C839 252 871 285 870 290 C869 295 826 271 820 280 C814 289 816 363 810 380 C804 397 767 453 760 450 C753 447 747 369 740 350 C733 331 700 279 690 260 C680 241 647 177 640 160 C633 143 626 90 620 90 C614 90 592 145 580 160 C568 175 516 229 500 240 C484 251 434 274 420 270 C406 266 364 218 360 200 C356 182 369 105 380 90 Z" fill="#a6330a" stroke="#5a1803" stroke-width="9.45" stroke-linejoin="round"/><ellipse cx="570" cy="300" rx="83" ry="93" fill="#ffffff" stroke="#160c06" stroke-width="13.5" transform="rotate(25 570 300)"/><ellipse cx="605" cy="260" rx="20" ry="35" fill="#0a0a0a" transform="rotate(25 605 260)"/><ellipse cx="690" cy="352" rx="33" ry="58" fill="#ffffff" stroke="#160c06" stroke-width="13.5" transform="rotate(10 690 352)"/><ellipse cx="702" cy="340" rx="10" ry="28" fill="#0a0a0a" transform="rotate(10 702 340)"/></g>
<g transform="translate(640,630) scale(0.21436)"><path d="M150 230 C153 219 191 178 200 180 C209 182 235 234 240 250 C245 266 256 332 252 340 C248 348 208 337 200 332 C192 327 175 300 170 290 C165 280 147 241 150 230 Z" fill="#a6330a" stroke="#5a1803" stroke-width="8.1" stroke-linejoin="round"/><path d="M170 380 C180 373 235 373 250 380 C265 387 272 413 262 420 C252 427 205 429 190 422 C175 415 160 387 170 380 Z" fill="#f4e0d1" stroke="#160c06" stroke-width="12.15" stroke-linejoin="round"/><path d="M229 689 C262 666 298 647 339 639 C382 633 390 636 409 659 C429 683 429 709 421 739 C415 771 429 777 379 791 C330 806 252 814 209 801 C168 790 195 766 199 739 C204 714 197 713 229 689 Z" fill="#32302d" stroke="#160c06" stroke-width="17.55" stroke-linejoin="round"/><path d="M220 670 C253 647 288 627 330 620 C372 613 381 617 400 640 C419 663 419 689 412 720 C405 751 419 758 370 772 C321 786 242 794 200 782 C158 770 185 746 190 720 C195 694 187 693 220 670 Z" fill="#aa7439" stroke="#160c06" stroke-width="13.5" stroke-linejoin="round"/><path d="M380 580 L460 600 L452 642 L380 622 Z" fill="#77777b" stroke="#160c06" stroke-width="10.8" stroke-linejoin="round"/><path d="M230 620 L330 640 L322 672 L240 662 Z" fill="#77777b" stroke="#160c06" stroke-width="10.8" stroke-linejoin="round"/><path d="M210 550 C235 540 338 552 370 560 C402 568 414 586 402 600 C390 614 330 638 300 642 C270 646 235 637 220 622 C205 607 185 560 210 550 Z" fill="#234389" stroke="#160c06" stroke-width="12.15" stroke-linejoin="round"/><path d="M250 390 C268 370 305 375 330 380 C355 385 388 400 400 420 C412 440 407 476 402 500 C397 524 394 553 370 562 C346 571 285 562 260 552 C235 542 222 527 220 500 C218 473 232 410 250 390 Z" fill="#74b033" stroke="#160c06" stroke-width="12.15" stroke-linejoin="round"/><path d="M60 470 C68 463 111 480 130 490 C149 500 172 516 172 530 C172 544 145 572 130 572 C115 572 92 549 80 532 C68 515 52 477 60 470 Z" fill="#f4e0d1" stroke="#160c06" stroke-width="12.15" stroke-linejoin="round"/><path d="M60 450 C70 435 133 408 160 410 C187 412 215 441 222 460 C229 479 220 515 200 522 C180 529 123 514 100 502 C77 490 50 465 60 450 Z" fill="#1f1f1f" stroke="#160c06" stroke-width="10.8" stroke-linejoin="round"/><path d="M130 400 C142 391 199 392 215 400 C231 408 238 441 225 450 C212 459 156 460 140 452 C124 444 118 409 130 400 Z" fill="#77777b" stroke="#160c06" stroke-width="9.45" stroke-linejoin="round"/><path d="M500 420 C513 400 583 407 600 420 C617 433 609 480 602 500 C595 520 574 535 560 542 C546 549 530 562 520 542 C510 522 487 440 500 420 Z" fill="#f4e0d1" stroke="#160c06" stroke-width="12.15" stroke-linejoin="round"/><path d="M450 450 C460 437 488 425 500 440 C512 455 527 520 522 540 C517 560 484 565 470 562 C456 559 443 539 440 520 C437 501 440 463 450 450 Z" fill="#1f1f1f" stroke="#160c06" stroke-width="10.8" stroke-linejoin="round"/><path d="M420 500 L460 495 L465 560 L425 562 Z" fill="#77777b" stroke="#160c06" stroke-width="9.45" stroke-linejoin="round"/><path d="M480 80 C502 80 536 102 560 130 C584 158 594 178 600 220 C606 262 600 304 592 340 C584 376 584 382 560 402 C536 422 506 442 470 442 C434 442 410 422 380 402 C350 382 342 360 320 342 C298 324 288 322 270 312 C252 302 240 308 230 292 C220 276 214 250 218 230 C222 210 234 184 250 190 C266 196 274 258 300 260 C326 262 350 226 380 200 C410 174 430 154 450 130 C470 106 458 80 480 80 Z" fill="#f4e0d1" stroke="#160c06" stroke-width="13.5" stroke-linejoin="round"/><path d="M270 312 C267 321 302 327 320 342 C338 357 355 385 380 402 C405 419 447 438 470 442 C493 446 528 439 520 425 C512 411 450 382 420 360 C390 338 365 298 340 290 C315 282 273 303 270 312 Z" fill="#e3c9b8"/><path d="M250 90 C265 76 373 46 400 40 C427 34 498 25 520 25 C542 25 603 30 620 40 C637 50 680 114 690 130 C700 146 721 194 720 200 C719 206 686 182 680 190 C674 198 666 266 660 280 C654 294 626 336 620 330 C614 324 606 240 600 220 C594 200 572 144 560 130 C548 116 491 80 480 80 C469 80 460 118 450 130 C440 142 395 187 380 200 C365 213 313 262 300 260 C287 258 255 197 250 180 C245 163 235 104 250 90 Z" fill="#a6330a" stroke="#5a1803" stroke-width="8.1" stroke-linejoin="round"/><ellipse cx="440" cy="230" rx="68" ry="83" fill="#ffffff" stroke="#160c06" stroke-width="13.5" transform="rotate(15 440 230)"/><ellipse cx="480" cy="220" rx="18" ry="35" fill="#0a0a0a" transform="rotate(15 480 220)"/><ellipse cx="560" cy="232" rx="33" ry="78" fill="#ffffff" stroke="#160c06" stroke-width="13.5" transform="rotate(8 560 232)"/><ellipse cx="575" cy="220" rx="12" ry="35" fill="#0a0a0a" transform="rotate(8 575 220)"/></g>
<g transform="translate(640,630) scale(0.21436)"><path d="M650 490 C655 480 718 439 730 440 C742 441 763 488 770 500 C777 512 805 553 802 560 C799 567 752 574 740 572 C728 570 689 548 680 540 C671 532 645 500 650 490 Z" fill="#a6330a" stroke="#5a1803" stroke-width="8.1" stroke-linejoin="round"/><path d="M650 620 C653 606 688 580 700 580 C712 580 725 606 722 620 C719 634 692 662 680 662 C668 662 647 634 650 620 Z" fill="#f4e0d1" stroke="#160c06" stroke-width="12.15" stroke-linejoin="round"/><path d="M630 640 L662 630 L682 800 L640 822 Z" fill="#77777b" stroke="#160c06" stroke-width="10.8" stroke-linejoin="round"/><path d="M497 740 C518 712 537 754 567 760 C598 768 608 750 627 770 C647 792 654 829 649 850 C645 872 624 846 607 862 C591 880 598 904 577 922 C556 941 541 952 517 942 C494 933 482 930 477 882 C473 836 476 769 497 740 Z" fill="#32302d" stroke="#160c06" stroke-width="17.55" stroke-linejoin="round"/><path d="M490 720 C511 692 530 733 560 740 C590 747 601 729 620 750 C639 771 647 809 642 830 C637 851 617 825 600 842 C583 859 591 883 570 902 C549 921 533 931 510 922 C487 913 475 909 470 862 C465 815 469 748 490 720 Z" fill="#aa7439" stroke="#160c06" stroke-width="13.5" stroke-linejoin="round"/><path d="M670 670 C685 663 738 712 770 720 C802 728 841 710 860 720 C879 730 892 766 882 780 C872 794 824 798 800 802 C776 806 760 809 740 802 C720 795 692 782 680 760 C668 738 655 677 670 670 Z" fill="#234389" stroke="#160c06" stroke-width="12.15" stroke-linejoin="round"/><path d="M830 790 L880 790 L882 822 L832 822 Z" fill="#f4e0d1" stroke="#160c06" stroke-width="10.8" stroke-linejoin="round"/><path d="M869 881 C881 855 923 846 949 841 C975 836 956 863 979 861 C1002 859 1025 826 1049 831 C1073 836 1081 855 1081 881 C1081 907 1087 915 1049 943 C1011 972 954 1001 919 1003 C884 1005 911 980 899 951 C887 923 857 907 869 881 Z" fill="#32302d" stroke="#160c06" stroke-width="17.55" stroke-linejoin="round"/><path d="M850 870 C862 844 904 835 930 830 C956 825 937 852 960 850 C983 848 1006 815 1030 820 C1054 825 1062 844 1062 870 C1062 896 1068 904 1030 932 C992 960 935 990 900 992 C865 994 892 968 880 940 C868 912 838 896 850 870 Z" fill="#aa7439" stroke="#160c06" stroke-width="13.5" stroke-linejoin="round"/><path d="M820 830 C830 816 891 790 910 790 C929 790 942 816 932 830 C922 844 869 872 850 872 C831 872 810 844 820 830 Z" fill="#77777b" stroke="#160c06" stroke-width="10.8" stroke-linejoin="round"/><path d="M700 600 C717 583 757 562 780 560 C803 558 821 570 840 590 C859 610 889 658 892 680 C895 702 880 715 860 722 C840 729 800 732 770 722 C740 712 692 680 680 660 C668 640 683 617 700 600 Z" fill="#74b033" stroke="#160c06" stroke-width="12.15" stroke-linejoin="round"/><path d="M880 690 C893 683 963 691 980 700 C997 709 995 735 982 742 C969 749 917 751 900 742 C883 733 867 697 880 690 Z" fill="#f4e0d1" stroke="#160c06" stroke-width="12.15" stroke-linejoin="round"/><path d="M990 640 C1005 616 1076 600 1100 610 C1124 620 1135 678 1132 700 C1129 722 1100 733 1080 742 C1060 751 1025 769 1010 752 C995 735 975 664 990 640 Z" fill="#1f1f1f" stroke="#160c06" stroke-width="10.8" stroke-linejoin="round"/><path d="M960 700 L1000 690 L1022 760 L980 772 Z" fill="#77777b" stroke="#160c06" stroke-width="9.45" stroke-linejoin="round"/><path d="M1030 290 C1040 298 1034 342 1040 380 C1046 418 1052 436 1060 480 C1068 524 1104 568 1082 600 C1060 632 990 646 950 642 C910 638 906 604 880 580 C854 556 840 536 820 520 C800 504 794 516 780 500 C766 484 750 462 748 440 C746 418 754 390 770 390 C786 390 804 438 830 440 C856 442 868 420 900 400 C932 380 964 362 990 340 C1016 318 1020 282 1030 290 Z" fill="#f4e0d1" stroke="#160c06" stroke-width="13.5" stroke-linejoin="round"/><path d="M780 500 C777 507 803 507 820 520 C837 533 858 560 880 580 C902 600 930 634 950 642 C970 650 1007 640 1000 626 C993 612 937 584 910 560 C883 536 862 490 840 480 C818 470 783 493 780 500 Z" fill="#e3c9b8"/><path d="M740 290 C746 276 798 246 820 240 C842 234 936 223 960 225 C984 227 1045 254 1060 260 C1075 266 1104 271 1110 290 C1116 309 1118 425 1120 450 C1122 475 1134 525 1130 540 C1126 555 1087 606 1080 600 C1073 594 1064 502 1060 480 C1056 458 1043 399 1040 380 C1037 361 1035 294 1030 290 C1025 286 1003 329 990 340 C977 351 916 390 900 400 C884 410 844 442 830 440 C816 438 769 395 760 380 C751 365 734 304 740 290 Z" fill="#a6330a" stroke="#5a1803" stroke-width="8.1" stroke-linejoin="round"/><ellipse cx="980" cy="440" rx="73" ry="88" fill="#ffffff" stroke="#160c06" stroke-width="13.5" transform="rotate(15 980 440)"/><ellipse cx="1015" cy="400" rx="15" ry="40" fill="#0a0a0a" transform="rotate(15 1015 400)"/></g>
<g transform="translate(890,630) scale(0.21445)"><path d="M150 200 C159 193 220 181 230 190 C240 199 251 275 252 290 C253 305 247 340 240 342 C233 344 190 320 180 312 C170 304 143 271 140 260 C137 249 141 207 150 200 Z" fill="#a6330a" stroke="#5a1803" stroke-width="8.1" stroke-linejoin="round"/><path d="M31 669 C55 646 87 634 131 639 C175 644 202 661 221 689 C240 717 225 735 213 759 C201 783 207 784 171 791 C136 798 94 803 61 791 C28 779 36 767 29 739 C22 711 7 692 31 669 Z" fill="#32302d" stroke="#160c06" stroke-width="17.55" stroke-linejoin="round"/><path d="M20 650 C44 627 76 615 120 620 C164 625 191 642 210 670 C229 698 214 716 202 740 C190 764 195 765 160 772 C125 779 83 784 50 772 C17 760 25 748 18 720 C11 692 -4 673 20 650 Z" fill="#aa7439" stroke="#160c06" stroke-width="13.5" stroke-linejoin="round"/><path d="M150 590 C167 590 228 625 240 640 C252 655 239 682 222 682 C205 682 152 657 140 642 C128 627 133 590 150 590 Z" fill="#77777b" stroke="#160c06" stroke-width="10.8" stroke-linejoin="round"/><path d="M190 500 C210 491 295 505 320 520 C345 535 350 575 342 590 C334 605 294 615 270 612 C246 609 213 591 200 572 C187 553 170 509 190 500 Z" fill="#234389" stroke="#160c06" stroke-width="12.15" stroke-linejoin="round"/><path d="M441 606 C455 592 485 613 511 596 C537 580 525 548 551 536 C577 525 602 530 621 546 C640 563 640 573 633 606 C626 639 613 660 591 688 C570 717 574 735 541 728 C508 721 474 687 451 658 C428 630 427 621 441 606 Z" fill="#32302d" stroke="#160c06" stroke-width="17.55" stroke-linejoin="round"/><path d="M420 600 C434 586 464 606 490 590 C516 574 504 542 530 530 C556 518 581 524 600 540 C619 556 619 567 612 600 C605 633 591 654 570 682 C549 710 553 729 520 722 C487 715 453 680 430 652 C407 624 406 614 420 600 Z" fill="#aa7439" stroke="#160c06" stroke-width="13.5" stroke-linejoin="round"/><path d="M370 590 C380 580 426 575 440 580 C454 585 462 612 452 622 C442 632 394 647 380 642 C366 637 360 600 370 590 Z" fill="#77777b" stroke="#160c06" stroke-width="10.8" stroke-linejoin="round"/><path d="M220 370 C237 355 268 345 290 350 C312 355 333 382 350 400 C367 418 397 440 392 460 C387 480 352 515 320 522 C288 529 222 516 200 502 C178 488 187 462 190 440 C193 418 203 385 220 370 Z" fill="#74b033" stroke="#160c06" stroke-width="12.15" stroke-linejoin="round"/><path d="M280 400 C287 390 323 408 330 420 C337 432 329 462 322 472 C315 482 297 494 290 482 C283 470 273 410 280 400 Z" fill="#f4e0d1" stroke="#160c06" stroke-width="10.8" stroke-linejoin="round"/><path d="M400 480 C410 465 451 485 460 500 C469 515 462 557 452 572 C442 587 409 607 400 592 C391 577 390 495 400 480 Z" fill="#f4e0d1" stroke="#160c06" stroke-width="12.15" stroke-linejoin="round"/><path d="M320 460 C332 445 385 433 400 450 C415 467 420 536 412 560 C404 584 364 595 350 592 C336 589 335 562 330 540 C325 518 308 475 320 460 Z" fill="#1f1f1f" stroke="#160c06" stroke-width="10.8" stroke-linejoin="round"/><path d="M300 470 L345 465 L352 522 L305 525 Z" fill="#77777b" stroke="#160c06" stroke-width="9.45" stroke-linejoin="round"/><path d="M520 50 C532 66 532 144 540 200 C548 256 578 282 562 330 C546 378 496 428 460 442 C424 456 408 426 380 402 C352 378 340 342 320 322 C300 302 296 314 280 302 C264 290 246 280 238 260 C230 240 236 216 240 200 C244 184 242 176 260 180 C278 184 302 220 330 220 C358 220 370 200 400 180 C430 160 456 146 480 120 C504 94 508 34 520 50 Z" fill="#f4e0d1" stroke="#160c06" stroke-width="13.5" stroke-linejoin="round"/><path d="M280 302 C275 311 303 305 320 322 C337 339 357 382 380 402 C403 422 440 441 460 442 C480 443 507 427 500 410 C493 393 445 363 420 340 C395 317 373 276 350 270 C327 264 285 293 280 302 Z" fill="#e3c9b8"/><path d="M240 100 C247 86 304 47 330 40 C356 33 470 29 500 30 C530 31 616 37 630 50 C644 63 634 144 640 160 C646 176 691 203 690 210 C689 217 637 215 630 230 C623 245 625 353 620 360 C615 367 588 316 580 300 C572 284 546 225 540 200 C534 175 526 58 520 50 C514 42 492 107 480 120 C468 133 415 170 400 180 C385 190 344 220 330 220 C316 220 269 192 260 180 C251 168 233 114 240 100 Z" fill="#a6330a" stroke="#5a1803" stroke-width="8.1" stroke-linejoin="round"/><ellipse cx="455" cy="220" rx="63" ry="88" fill="#ffffff" stroke="#160c06" stroke-width="13.5" transform="rotate(15 455 220)"/><ellipse cx="500" cy="200" rx="12" ry="40" fill="#0a0a0a" transform="rotate(15 500 200)"/></g>
<g transform="translate(890,630) scale(0.21445)"><path d="M750 240 C756 229 820 206 830 210 C840 214 852 266 852 280 C852 294 838 348 830 352 C822 356 778 333 770 322 C762 311 744 251 750 240 Z" fill="#a6330a" stroke="#5a1803" stroke-width="8.1" stroke-linejoin="round"/><path d="M740 340 L790 340 L802 382 L750 382 Z" fill="#f4e0d1" stroke="#160c06" stroke-width="10.8" stroke-linejoin="round"/><path d="M680 520 L740 520 L732 552 L680 552 Z" fill="#f4e0d1" stroke="#160c06" stroke-width="10.8" stroke-linejoin="round"/><path d="M1180 520 L1250 520 L1252 562 L1190 562 Z" fill="#f4e0d1" stroke="#160c06" stroke-width="10.8" stroke-linejoin="round"/><path d="M796 634 C813 615 824 609 856 604 C890 599 908 602 936 614 C965 626 971 631 978 654 C986 677 1007 697 968 714 C931 731 859 733 816 726 C774 719 792 706 786 684 C782 663 781 653 796 634 Z" fill="#32302d" stroke="#160c06" stroke-width="17.55" stroke-linejoin="round"/><path d="M780 620 C796 601 807 595 840 590 C873 585 892 588 920 600 C948 612 955 617 962 640 C969 663 990 683 952 700 C914 717 842 719 800 712 C758 705 775 691 770 670 C765 649 764 639 780 620 Z" fill="#aa7439" stroke="#160c06" stroke-width="13.5" stroke-linejoin="round"/><path d="M989 649 C999 626 1000 621 1029 609 C1060 598 1089 592 1119 599 C1151 606 1154 616 1161 639 C1169 663 1166 680 1151 699 C1137 719 1138 719 1099 721 C1062 724 1016 728 989 711 C964 695 981 673 989 649 Z" fill="#32302d" stroke="#160c06" stroke-width="17.55" stroke-linejoin="round"/><path d="M970 640 C979 616 980 612 1010 600 C1040 588 1069 583 1100 590 C1131 597 1135 607 1142 630 C1149 653 1146 671 1132 690 C1118 709 1118 709 1080 712 C1042 715 996 719 970 702 C944 685 961 664 970 640 Z" fill="#aa7439" stroke="#160c06" stroke-width="13.5" stroke-linejoin="round"/><path d="M790 550 L920 555 L922 592 L790 592 Z" fill="#77777b" stroke="#160c06" stroke-width="10.8" stroke-linejoin="round"/><path d="M990 550 L1110 550 L1112 592 L990 592 Z" fill="#77777b" stroke="#160c06" stroke-width="10.8" stroke-linejoin="round"/><path d="M800 480 C822 476 930 498 980 500 C1030 502 1076 485 1100 490 C1124 495 1139 521 1122 530 C1105 539 1045 543 1000 542 C955 541 883 532 850 522 C817 512 778 484 800 480 Z" fill="#234389" stroke="#160c06" stroke-width="12.15" stroke-linejoin="round"/><path d="M840 370 C853 360 880 367 900 380 C920 393 940 433 960 450 C980 467 1017 471 1020 480 C1023 489 1007 500 980 502 C953 504 887 502 860 492 C833 482 823 460 820 440 C817 420 827 380 840 370 Z" fill="#74b033" stroke="#160c06" stroke-width="12.15" stroke-linejoin="round"/><path d="M640 400 C660 388 716 373 740 380 C764 387 780 416 782 440 C784 464 770 510 750 522 C730 534 682 524 660 512 C638 500 623 469 620 450 C617 431 620 412 640 400 Z" fill="#1f1f1f" stroke="#160c06" stroke-width="10.8" stroke-linejoin="round"/><path d="M690 360 L750 370 L762 402 L700 402 Z" fill="#77777b" stroke="#160c06" stroke-width="9.45" stroke-linejoin="round"/><path d="M1190 420 C1203 401 1260 392 1280 400 C1300 408 1314 450 1312 470 C1310 490 1289 515 1270 522 C1251 529 1213 529 1200 512 C1187 495 1177 439 1190 420 Z" fill="#1f1f1f" stroke="#160c06" stroke-width="10.8" stroke-linejoin="round"/><path d="M1060 190 C1088 190 1096 234 1120 260 C1144 286 1166 292 1180 320 C1194 348 1204 370 1192 400 C1180 430 1154 456 1120 472 C1086 488 1058 492 1020 482 C982 472 958 448 930 422 C902 396 896 370 880 352 C864 334 858 350 850 332 C842 314 834 280 838 260 C842 240 858 226 870 230 C882 234 878 274 900 280 C922 286 948 278 980 260 C1012 242 1032 190 1060 190 Z" fill="#f4e0d1" stroke="#160c06" stroke-width="13.5" stroke-linejoin="round"/><path d="M880 352 C880 367 907 400 930 422 C953 444 995 473 1020 482 C1045 491 1085 488 1080 476 C1075 464 1015 434 990 410 C965 386 948 340 930 330 C912 320 880 337 880 352 Z" fill="#e3c9b8"/><path d="M860 130 C874 110 921 80 960 70 C999 60 1081 52 1120 60 C1159 68 1200 92 1220 120 C1240 148 1234 224 1250 250 C1266 276 1322 270 1330 290 C1338 310 1315 368 1300 380 C1285 392 1248 379 1230 370 C1212 361 1196 336 1180 320 C1164 304 1138 280 1120 260 C1102 240 1081 190 1060 190 C1039 190 1004 246 980 260 C956 274 916 289 900 280 C884 271 876 222 870 200 C864 178 846 150 860 130 Z" fill="#a6330a" stroke="#5a1803" stroke-width="8.1" stroke-linejoin="round"/><path d="M985 300 Q1020 340 1050 330 M1090 350 Q1085 400 1110 425" fill="none" stroke="#160c06" stroke-width="9" stroke-linecap="round"/></g>
<g transform="translate(1150,640) scale(0.20585)"><path d="M160 540 C163 528 196 467 210 460 C224 453 289 462 300 470 C311 478 326 531 322 540 C318 549 274 558 260 562 C246 566 190 584 180 582 C170 580 157 552 160 540 Z" fill="#a6330a" stroke="#5a1803" stroke-width="8.1" stroke-linejoin="round"/><path d="M400 520 C405 511 456 504 470 500 C484 496 535 469 540 480 C545 491 529 596 522 610 C515 624 480 624 470 622 C460 620 427 600 420 590 C413 580 395 529 400 520 Z" fill="#a6330a" stroke="#5a1803" stroke-width="8.1" stroke-linejoin="round"/><path d="M217 860 C250 835 268 846 307 850 C347 855 357 857 387 880 C418 904 432 920 439 950 C447 981 450 994 419 1010 C389 1027 343 1010 307 1022 C272 1035 293 1058 267 1062 C242 1067 221 1066 197 1042 C174 1019 163 1003 167 960 C172 918 185 886 217 860 Z" fill="#32302d" stroke="#160c06" stroke-width="17.55" stroke-linejoin="round"/><path d="M210 840 C243 814 260 825 300 830 C340 835 349 837 380 860 C411 883 425 900 432 930 C439 960 443 973 412 990 C381 1007 335 990 300 1002 C265 1014 286 1037 260 1042 C234 1047 213 1046 190 1022 C167 998 155 982 160 940 C165 898 177 866 210 840 Z" fill="#aa7439" stroke="#160c06" stroke-width="13.5" stroke-linejoin="round"/><path d="M280 795 L400 795 L402 827 L280 827 Z" fill="#77777b" stroke="#160c06" stroke-width="9.45" stroke-linejoin="round"/><path d="M270 720 C288 708 378 708 400 720 C422 732 420 780 402 792 C384 804 312 804 290 792 C268 780 252 732 270 720 Z" fill="#234389" stroke="#160c06" stroke-width="12.15" stroke-linejoin="round"/><path d="M320 510 L400 520 L382 572 L340 572 Z" fill="#f4e0d1" stroke="#160c06" stroke-width="10.8" stroke-linejoin="round"/><path d="M230 570 C247 557 300 538 320 540 C340 542 337 577 350 580 C363 583 388 550 400 560 C412 570 422 613 422 640 C422 667 424 708 400 722 C376 736 303 734 280 722 C257 710 270 667 260 650 C250 633 225 633 220 620 C215 607 213 583 230 570 Z" fill="#74b033" stroke="#160c06" stroke-width="12.15" stroke-linejoin="round"/><path d="M200 620 L240 600 L262 650 L220 672 Z" fill="#f4e0d1" stroke="#160c06" stroke-width="10.8" stroke-linejoin="round"/><path d="M105 780 C120 771 204 802 220 820 C236 838 217 881 202 890 C187 899 146 890 130 872 C114 854 90 789 105 780 Z" fill="#f4e0d1" stroke="#160c06" stroke-width="12.15" stroke-linejoin="round"/><path d="M130 700 C152 688 218 697 240 710 C262 723 265 761 262 780 C259 799 245 822 220 822 C195 822 125 802 110 782 C95 762 108 712 130 700 Z" fill="#1f1f1f" stroke="#160c06" stroke-width="10.8" stroke-linejoin="round"/><path d="M170 640 L250 670 L242 712 L160 682 Z" fill="#77777b" stroke="#160c06" stroke-width="9.45" stroke-linejoin="round"/><path d="M380 810 C390 796 440 788 450 800 C460 812 452 868 442 882 C432 896 400 894 390 882 C380 870 370 824 380 810 Z" fill="#f4e0d1" stroke="#160c06" stroke-width="12.15" stroke-linejoin="round"/><path d="M400 700 C407 685 438 680 450 690 C462 700 474 741 472 760 C470 779 450 798 440 802 C430 806 417 799 410 782 C403 765 393 715 400 700 Z" fill="#1f1f1f" stroke="#160c06" stroke-width="10.8" stroke-linejoin="round"/><path d="M400 640 L440 640 L445 702 L402 702 Z" fill="#77777b" stroke="#160c06" stroke-width="9.45" stroke-linejoin="round"/><path d="M410 170 C430 164 418 204 440 230 C462 256 500 266 520 300 C540 334 538 366 540 400 C542 434 546 450 532 470 C518 490 496 492 470 502 C444 512 430 520 400 522 C370 524 340 526 320 512 C300 498 316 462 300 450 C284 438 260 458 240 452 C220 446 210 438 200 420 C190 402 184 376 188 360 C192 344 202 338 220 340 C238 342 256 386 280 370 C304 354 314 300 340 260 C366 220 390 176 410 170 Z" fill="#f4e0d1" stroke="#160c06" stroke-width="13.5" stroke-linejoin="round"/><path d="M190 200 C199 182 265 157 290 150 C315 143 415 129 440 130 C465 131 524 147 540 160 C556 173 593 234 600 260 C607 286 612 394 610 420 C608 446 586 508 580 520 C574 532 554 552 550 540 C546 528 543 424 540 400 C537 376 530 317 520 300 C510 283 451 243 440 230 C429 217 420 167 410 170 C400 173 353 240 340 260 C327 280 289 358 280 370 C271 382 258 384 250 380 C242 376 206 348 200 330 C194 312 181 218 190 200 Z" fill="#a6330a" stroke="#5a1803" stroke-width="8.1" stroke-linejoin="round"/><ellipse cx="380" cy="260" rx="58" ry="83" fill="#ffffff" stroke="#160c06" stroke-width="13.5" transform="rotate(15 380 260)"/><ellipse cx="400" cy="222" rx="18" ry="35" fill="#0a0a0a" transform="rotate(15 400 222)"/><ellipse cx="525" cy="270" rx="43" ry="78" fill="#ffffff" stroke="#160c06" stroke-width="13.5" transform="rotate(8 525 270)"/><ellipse cx="535" cy="240" rx="12" ry="35" fill="#0a0a0a" transform="rotate(8 535 240)"/></g>
<g transform="translate(1150,640) scale(0.20585)"><path d="M640 300 C640 292 670 270 680 270 C690 270 731 287 740 300 C749 313 774 390 772 400 C770 410 729 407 720 402 C711 397 688 360 680 350 C672 340 640 308 640 300 Z" fill="#a6330a" stroke="#5a1803" stroke-width="8.1" stroke-linejoin="round"/><path d="M686 714 C701 679 735 700 776 704 C819 709 820 713 866 734 C913 755 948 769 976 794 C1005 820 1003 823 988 844 C975 866 966 877 916 886 C867 896 823 894 776 886 C730 879 738 895 716 854 C696 814 673 749 686 714 Z" fill="#32302d" stroke="#160c06" stroke-width="17.55" stroke-linejoin="round"/><path d="M670 700 C684 665 718 685 760 690 C802 695 803 699 850 720 C897 741 932 754 960 780 C988 806 986 809 972 830 C958 851 949 862 900 872 C851 882 807 879 760 872 C713 865 721 880 700 840 C679 800 656 735 670 700 Z" fill="#aa7439" stroke="#160c06" stroke-width="13.5" stroke-linejoin="round"/><path d="M760 660 C777 653 878 666 900 680 C922 694 909 735 892 742 C875 749 822 736 800 722 C778 708 743 667 760 660 Z" fill="#77777b" stroke="#160c06" stroke-width="10.8" stroke-linejoin="round"/><path d="M690 610 C705 601 795 611 820 620 C845 629 857 653 842 662 C827 671 755 681 730 672 C705 663 675 619 690 610 Z" fill="#234389" stroke="#160c06" stroke-width="12.15" stroke-linejoin="round"/><path d="M720 470 C735 453 758 440 780 440 C802 440 828 457 850 470 C872 483 904 501 912 520 C920 539 915 565 900 582 C885 599 853 619 820 622 C787 625 722 616 700 602 C678 588 687 562 690 540 C693 518 705 487 720 470 Z" fill="#74b033" stroke="#160c06" stroke-width="12.15" stroke-linejoin="round"/><path d="M790 510 C790 491 815 488 830 500 C845 512 882 561 882 580 C882 599 845 624 830 612 C815 600 790 529 790 510 Z" fill="#f4e0d1" stroke="#160c06" stroke-width="10.8" stroke-linejoin="round"/><path d="M1040 510 L1080 510 L1077 562 L1045 562 Z" fill="#1f1f1f" stroke="#160c06" stroke-width="9.45" stroke-linejoin="round"/><path d="M920 520 L1040 510 L1052 640 L920 652 Z" fill="#1f1f1f" stroke="#160c06" stroke-width="10.8" stroke-linejoin="round"/><path d="M890 570 L920 570 L925 650 L895 642 Z" fill="#77777b" stroke="#160c06" stroke-width="9.45" stroke-linejoin="round"/><rect x="972" y="545" width="28" height="70" fill="#e8e8e8" stroke="#111" stroke-width="7"/><path d="M980 130 C1002 134 1020 180 1040 220 C1060 260 1070 286 1080 330 C1090 374 1108 408 1092 440 C1076 472 1038 484 1000 492 C962 500 932 496 900 482 C868 468 862 438 840 422 C818 406 808 416 790 402 C772 388 754 370 748 350 C742 330 752 314 760 300 C768 286 776 274 790 280 C804 286 812 330 830 330 C848 330 860 306 880 280 C900 254 910 230 930 200 C950 170 958 126 980 130 Z" fill="#f4e0d1" stroke="#160c06" stroke-width="13.5" stroke-linejoin="round"/><path d="M790 402 C787 412 822 409 840 422 C858 435 873 470 900 482 C927 494 977 494 1000 492 C1023 490 1052 480 1040 470 C1028 460 960 448 930 430 C900 412 883 365 860 360 C837 355 793 392 790 402 Z" fill="#e3c9b8"/><path d="M760 170 C766 154 828 126 850 120 C872 114 954 110 980 110 C1006 110 1091 111 1110 120 C1129 129 1163 182 1170 200 C1177 218 1182 280 1182 300 C1182 320 1178 385 1170 400 C1162 415 1109 457 1100 450 C1091 443 1086 353 1080 330 C1074 307 1050 240 1040 220 C1030 200 991 132 980 130 C969 128 940 185 930 200 C920 215 890 267 880 280 C870 293 839 330 830 330 C821 330 797 296 790 280 C783 264 754 186 760 170 Z" fill="#a6330a" stroke="#5a1803" stroke-width="8.1" stroke-linejoin="round"/><ellipse cx="990" cy="300" rx="73" ry="98" fill="#ffffff" stroke="#160c06" stroke-width="13.5" transform="rotate(12 990 300)"/><ellipse cx="1020" cy="300" rx="18" ry="45" fill="#0a0a0a" transform="rotate(12 1020 300)"/></g>
<g transform="translate(630,430) scale(0.18868)"><path d="M112 440 L122 508" fill="none" stroke="#f2f2f2" stroke-width="12.15" stroke-linecap="round" stroke-linejoin="round"/><path d="M430 560 Q445 620 435 680 M360 600 Q380 640 372 690" fill="none" stroke="#4f8420" stroke-width="8.1" stroke-linecap="round" stroke-linejoin="round"/><path d="M200 470 L260 520 M330 500 L300 470 M450 490 L520 520 M560 520 L640 480" fill="none" stroke="#7a2306" stroke-width="8.1" stroke-linecap="round" stroke-linejoin="round"/></g>
<g transform="translate(750,430) scale(0.18868)"><path d="M142 292 L150 350" fill="none" stroke="#f2f2f2" stroke-width="12.15" stroke-linecap="round" stroke-linejoin="round"/><path d="M500 580 Q512 640 500 700 M430 600 Q450 650 440 690" fill="none" stroke="#4f8420" stroke-width="8.1" stroke-linecap="round" stroke-linejoin="round"/><path d="M250 490 L330 520 M400 530 L380 500 M520 530 L600 520 M640 530 L710 500" fill="none" stroke="#7a2306" stroke-width="8.1" stroke-linecap="round" stroke-linejoin="round"/><path d="M90 190 L100 260 M150 195 L150 262 M200 190 L196 252" fill="none" stroke="#160c06" stroke-width="9.45" stroke-linecap="round" stroke-linejoin="round"/></g>
<g transform="translate(880,430) scale(0.18868)"><path d="M712 420 L720 498" fill="none" stroke="#f2f2f2" stroke-width="12.15" stroke-linecap="round" stroke-linejoin="round"/><path d="M420 560 Q432 620 420 680 M360 590 Q380 640 372 680" fill="none" stroke="#4f8420" stroke-width="8.1" stroke-linecap="round" stroke-linejoin="round"/><path d="M200 480 L270 520 M340 510 L320 480 M450 490 L520 510" fill="none" stroke="#7a2306" stroke-width="8.1" stroke-linecap="round" stroke-linejoin="round"/></g>
<g transform="translate(1010,430) scale(0.18868)"><path d="M722 270 L726 330" fill="none" stroke="#f2f2f2" stroke-width="12.15" stroke-linecap="round" stroke-linejoin="round"/><path d="M400 570 Q412 630 400 690 M340 600 Q360 650 352 690" fill="none" stroke="#4f8420" stroke-width="8.1" stroke-linecap="round" stroke-linejoin="round"/><path d="M190 500 L260 530 M330 530 L310 500 M440 510 L520 520 M570 490 L640 470" fill="none" stroke="#7a2306" stroke-width="8.1" stroke-linecap="round" stroke-linejoin="round"/></g>
<g transform="translate(1150,450) scale(0.19728)"><path d="M345 310 Q335 430 365 500 M232 482 Q330 565 420 500" fill="none" stroke="#160c06" stroke-width="9.45" stroke-linecap="round" stroke-linejoin="round"/><path d="M130 888 L122 920 M175 882 L170 930 M220 876 L220 934" fill="none" stroke="#160c06" stroke-width="8.1" stroke-linecap="round" stroke-linejoin="round"/><path d="M385 912 L388 1058" fill="none" stroke="#160c06" stroke-width="10.8" stroke-linecap="round" stroke-linejoin="round"/><path d="M160 815 L230 812" fill="none" stroke="#f2f2f2" stroke-width="12.15" stroke-linecap="round" stroke-linejoin="round"/><path d="M270 690 Q300 720 340 700" fill="none" stroke="#4f8420" stroke-width="8.1" stroke-linecap="round" stroke-linejoin="round"/></g>
<g transform="translate(1150,450) scale(0.19728)"><path d="M905 600 Q985 675 1080 640 M1082 520 Q1098 560 1092 600" fill="none" stroke="#160c06" stroke-width="9.45" stroke-linecap="round" stroke-linejoin="round"/><path d="M1062 730 L1140 724 M1064 770 L1134 764" fill="none" stroke="#160c06" stroke-width="8.1" stroke-linecap="round" stroke-linejoin="round"/><path d="M705 772 L768 750" fill="none" stroke="#f2f2f2" stroke-width="13.5" stroke-linecap="round" stroke-linejoin="round"/><path d="M860 680 L905 760" fill="none" stroke="#4f8420" stroke-width="8.1" stroke-linecap="round" stroke-linejoin="round"/></g>
<g transform="translate(480,630) scale(0.18868)"><path d="M470 420 Q560 505 700 440 M690 300 Q715 350 715 400" fill="none" stroke="#160c06" stroke-width="9.45" stroke-linecap="round" stroke-linejoin="round"/><path d="M745 560 L825 550 M750 602 L818 596" fill="none" stroke="#160c06" stroke-width="8.1" stroke-linecap="round" stroke-linejoin="round"/><path d="M112 502 L172 490" fill="none" stroke="#f2f2f2" stroke-width="13.5" stroke-linecap="round" stroke-linejoin="round"/><path d="M400 500 Q440 540 500 560" fill="none" stroke="#4f8420" stroke-width="8.1" stroke-linecap="round" stroke-linejoin="round"/></g>
<g transform="translate(640,630) scale(0.21436)"><path d="M360 360 Q450 432 570 370" fill="none" stroke="#160c06" stroke-width="9.45" stroke-linecap="round" stroke-linejoin="round"/><path d="M520 460 L600 455 M525 500 L596 496" fill="none" stroke="#160c06" stroke-width="8.1" stroke-linecap="round" stroke-linejoin="round"/><path d="M90 470 L150 450" fill="none" stroke="#f2f2f2" stroke-width="10.8" stroke-linecap="round" stroke-linejoin="round"/><path d="M300 440 Q330 470 380 460" fill="none" stroke="#4f8420" stroke-width="8.1" stroke-linecap="round" stroke-linejoin="round"/></g>
<g transform="translate(640,630) scale(0.21436)"><path d="M880 545 Q950 622 1060 590" fill="none" stroke="#160c06" stroke-width="9.45" stroke-linecap="round" stroke-linejoin="round"/><path d="M1052 652 L1066 718" fill="none" stroke="#f2f2f2" stroke-width="13.5" stroke-linecap="round" stroke-linejoin="round"/></g>
<g transform="translate(890,630) scale(0.21445)"><path d="M350 340 Q430 425 540 360" fill="none" stroke="#160c06" stroke-width="9.45" stroke-linecap="round" stroke-linejoin="round"/><path d="M350 500 L390 490" fill="none" stroke="#f2f2f2" stroke-width="10.8" stroke-linecap="round" stroke-linejoin="round"/></g>
<g transform="translate(890,630) scale(0.21445)"><path d="M900 380 Q1000 472 1130 440" fill="none" stroke="#160c06" stroke-width="9.45" stroke-linecap="round" stroke-linejoin="round"/><path d="M680 445 L732 452 M1220 456 L1270 446" fill="none" stroke="#f2f2f2" stroke-width="13.5" stroke-linecap="round" stroke-linejoin="round"/></g>
<g transform="translate(1150,640) scale(0.20585)"><path d="M468 405 Q505 378 522 420 M330 395 Q400 420 470 405" fill="none" stroke="#160c06" stroke-width="9.45" stroke-linecap="round" stroke-linejoin="round"/><path d="M140 800 L150 868 M176 812 L184 880" fill="none" stroke="#160c06" stroke-width="8.1" stroke-linecap="round" stroke-linejoin="round"/><path d="M150 742 L200 760" fill="none" stroke="#f2f2f2" stroke-width="12.15" stroke-linecap="round" stroke-linejoin="round"/><path d="M300 640 Q330 670 370 650" fill="none" stroke="#4f8420" stroke-width="8.1" stroke-linecap="round" stroke-linejoin="round"/></g>
<g transform="translate(1150,640) scale(0.20585)"><path d="M860 400 Q950 472 1070 430" fill="none" stroke="#160c06" stroke-width="9.45" stroke-linecap="round" stroke-linejoin="round"/></g>
</svg>
<div class="b" style="left:1432.00px;top:206.00px;width:618.00px;height:48.00px;background:#dfdfdf;"></div>
<div class="t" style="left:1446.40px;top:218.90px;font-size:22.03px;line-height:26.44px;letter-spacing:-0.358px;color:#000;">Settings</div>
<div class="b" style="left:1432.00px;top:254.00px;width:583.50px;height:855.00px;background:#ffffff;"></div>
<div class="b" style="left:2015.50px;top:254.00px;width:34.50px;height:855.00px;background:#f0f0f0;"></div>
<div class="b" style="left:2024.10px;top:288.00px;width:18.80px;height:333.70px;background:#878787;"></div>
<div class="b" style="left:1432.00px;top:254.60px;width:583.50px;height:43.40px;background:#dedede;"></div>
<div class="b" style="left:1432.00px;top:253.80px;width:583.50px;height:1.40px;background:#9c9c9c;"></div>
<div class="b" style="left:1432.00px;top:297.60px;width:583.50px;height:1.40px;background:#9c9c9c;"></div>
<div class="t" style="left:1476.60px;top:265.90px;font-size:22.03px;line-height:26.44px;letter-spacing:-0.879px;color:#000;">Data</div>
<div class="b" style="left:1432.00px;top:578.60px;width:583.50px;height:43.40px;background:#dedede;"></div>
<div class="b" style="left:1432.00px;top:577.80px;width:583.50px;height:1.40px;background:#9c9c9c;"></div>
<div class="b" style="left:1432.00px;top:621.60px;width:583.50px;height:1.40px;background:#9c9c9c;"></div>
<div class="t" style="left:1476.60px;top:589.90px;font-size:22.03px;line-height:26.44px;letter-spacing:0.276px;color:#000;">Texture</div>
<div class="b" style="left:1432.00px;top:888.60px;width:583.50px;height:43.40px;background:#dedede;"></div>
<div class="b" style="left:1432.00px;top:887.80px;width:583.50px;height:1.40px;background:#9c9c9c;"></div>
<div class="b" style="left:1432.00px;top:931.60px;width:583.50px;height:1.40px;background:#9c9c9c;"></div>
<div class="t" style="left:1476.60px;top:899.90px;font-size:22.03px;line-height:26.44px;letter-spacing:-0.349px;color:#000;">Layout</div>
<div class="t" style="left:1577.60px;top:329.40px;font-size:22.13px;line-height:26.56px;letter-spacing:-0.299px;color:#000;">Data Format</div>
<div class="b" style="left:1711.0px;top:319.0px;width:285.8px;height:43.8px;box-sizing:border-box;background:#fdfdfd;border:1.2px solid #e9e9e9;border-bottom-color:#c6c6c6;border-radius:3.5px;"></div>
<div class="t" style="left:1718.40px;top:329.40px;font-size:22.13px;line-height:26.56px;letter-spacing:0.217px;color:#000;">Unity® - Texture2D sprite s</div>
<div class="t" style="left:1617.50px;top:383.00px;font-size:22.13px;line-height:26.56px;letter-spacing:-0.137px;color:#000;">Data file</div>
<div class="b" style="left:1711.0px;top:376.0px;width:238.6px;height:37.6px;box-sizing:border-box;background:#fdfdfd;border:1.2px solid #e9e9e9;border-bottom-color:#c6c6c6;border-radius:3.5px;border-left:none;border-radius:0 3px 3px 0;"></div>
<div class="b" style="left:1711px;top:377px;width:236px;height:35px;overflow:hidden"><div class="t" style="left:-10.50px;top:6.20px;font-size:22.13px;line-height:26.56px;letter-spacing:0.075px;color:#000;">oject/spritesheet.tpsheet</div></div>
<div class="t" style="left:1522.80px;top:432.00px;font-size:22.13px;line-height:26.56px;letter-spacing:-0.092px;color:#000;">Trim sprite names</div>
<div class="b" style="left:1710.4px;top:430.3px;width:25.4px;height:25.4px;box-sizing:border-box;background:#f3f3f3;border:1.5px solid #858585;border-radius:5px"></div>
<div class="t" style="left:1495.40px;top:480.00px;font-size:22.13px;line-height:26.56px;letter-spacing:-0.250px;color:#000;">Prepend folder name</div>
<div class="b" style="left:1710.4px;top:478.4px;width:25.4px;height:25.4px;box-sizing:border-box;background:#f3f3f3;border:1.5px solid #858585;border-radius:5px"></div>
<div class="t" style="left:1574.00px;top:529.00px;font-size:22.13px;line-height:26.56px;letter-spacing:0.163px;color:#000;">Texture path</div>
<div class="b" style="left:1711.0px;top:522.6px;width:286.6px;height:37.2px;box-sizing:border-box;background:#fdfdfd;border:1.2px solid #e9e9e9;border-bottom-color:#c6c6c6;border-radius:3.5px;"></div>
<div class="t" style="left:1552.80px;top:649.00px;font-size:22.13px;line-height:26.56px;letter-spacing:0.258px;color:#000;">Texture format</div>
<div class="b" style="left:1711.0px;top:642.6px;width:286.0px;height:37.4px;box-sizing:border-box;background:#fdfdfd;border:1.2px solid #e9e9e9;border-bottom-color:#c6c6c6;border-radius:3.5px;"></div>
<div class="t" style="left:1718.60px;top:649.00px;font-size:22.13px;line-height:26.56px;letter-spacing:-1.430px;color:#000;">PNG-32</div>
<div class="t" style="left:1588.40px;top:699.00px;font-size:22.13px;line-height:26.56px;letter-spacing:0.198px;color:#000;">Texture file</div>
<div class="b" style="left:1711.0px;top:692.6px;width:238.6px;height:37.4px;box-sizing:border-box;background:#fdfdfd;border:1.2px solid #e9e9e9;border-bottom-color:#c6c6c6;border-radius:3.5px;"></div>
<div class="t" style="left:1716.60px;top:699.00px;font-size:22.13px;line-height:26.56px;letter-spacing:-0.224px;color:#8a8a8a;">spritesheet.png</div>
<div class="t" style="left:1563.20px;top:744.00px;font-size:22.13px;line-height:26.56px;letter-spacing:-0.489px;color:#000;">Png Opt Level</div>
<div class="b" style="left:1711.00px;top:750.20px;width:264.60px;height:7.40px;background:#e6e6e6;border:1px solid #d8d8d8;box-sizing:border-box;border-radius:2px;"></div>
<div class="b" style="left:1710.30px;top:744.10px;width:20.80px;height:20.60px;background:#0b78d7;"></div>
<div class="t" style="left:1985.80px;top:744.40px;font-size:22.13px;line-height:26.56px;letter-spacing:0.000px;color:#000;">0</div>
<div class="t" style="left:1582.60px;top:789.00px;font-size:22.13px;line-height:26.56px;letter-spacing:-0.168px;color:#000;">Pixel format</div>
<div class="b" style="left:1711.0px;top:782.6px;width:286.0px;height:37.4px;box-sizing:border-box;background:#fdfdfd;border:1.2px solid #e9e9e9;border-bottom-color:#c6c6c6;border-radius:3.5px;"></div>
<div class="t" style="left:1718.60px;top:789.00px;font-size:22.13px;line-height:26.56px;letter-spacing:-1.480px;color:#000;">RGBA8888</div>
<div class="t" style="left:1475.20px;top:839.00px;font-size:22.13px;line-height:26.56px;letter-spacing:-0.280px;color:#000;">Transparency Handling</div>
<div class="b" style="left:1711.0px;top:832.6px;width:286.0px;height:37.4px;box-sizing:border-box;background:#fdfdfd;border:1.2px solid #e9e9e9;border-bottom-color:#c6c6c6;border-radius:3.5px;"></div>
<div class="t" style="left:1718.60px;top:839.00px;font-size:22.13px;line-height:26.56px;letter-spacing:-0.232px;color:#000;">Clear transparent pixels</div>
<div class="t" style="left:1616.00px;top:959.00px;font-size:22.13px;line-height:26.56px;letter-spacing:-0.817px;color:#000;">Max size</div>
<div class="b" style="left:1711.0px;top:952.6px;width:128.0px;height:37.4px;box-sizing:border-box;background:#fdfdfd;border:1.2px solid #e9e9e9;border-bottom-color:#c6c6c6;border-radius:3.5px;"></div>
<div class="t" style="left:1720.60px;top:959.00px;font-size:22.13px;line-height:26.56px;letter-spacing:-0.745px;color:#000;">2048</div>
<div class="t" style="left:1847.40px;top:956.18px;font-size:24.48px;line-height:29.38px;letter-spacing:0.000px;color:#000;">×</div>
<div class="b" style="left:1869.0px;top:952.6px;width:128.0px;height:37.4px;box-sizing:border-box;background:#fdfdfd;border:1.2px solid #e9e9e9;border-bottom-color:#c6c6c6;border-radius:3.5px;"></div>
<div class="t" style="left:1878.60px;top:959.00px;font-size:22.13px;line-height:26.56px;letter-spacing:-0.745px;color:#000;">2048</div>
<div class="t" style="left:1604.60px;top:1009.00px;font-size:22.13px;line-height:26.56px;letter-spacing:-0.737px;color:#000;">Fixed size</div>
<div class="b" style="left:1711.0px;top:1002.6px;width:128.0px;height:37.4px;box-sizing:border-box;background:#fdfdfd;border:1.2px solid #e9e9e9;border-bottom-color:#c6c6c6;border-radius:3.5px;"></div>
<div class="t" style="left:1847.40px;top:1006.18px;font-size:24.48px;line-height:29.38px;letter-spacing:0.000px;color:#000;">×</div>
<div class="b" style="left:1869.0px;top:1002.6px;width:128.0px;height:37.4px;box-sizing:border-box;background:#fdfdfd;border:1.2px solid #e9e9e9;border-bottom-color:#c6c6c6;border-radius:3.5px;"></div>
<div class="t" style="left:1547.20px;top:1059.00px;font-size:22.13px;line-height:26.56px;letter-spacing:-0.389px;color:#000;">Size constraints</div>
<div class="b" style="left:1711.0px;top:1052.6px;width:286.0px;height:37.4px;box-sizing:border-box;background:#fdfdfd;border:1.2px solid #e9e9e9;border-bottom-color:#c6c6c6;border-radius:3.5px;"></div>
<div class="t" style="left:1718.60px;top:1059.00px;font-size:22.13px;line-height:26.56px;letter-spacing:-0.693px;color:#000;">Any size</div>
<div class="b" style="left:1700px;top:1100px;width:60px;height:8.6px;overflow:hidden"><div class="b" style="left:10.6px;top:6.4px;width:25.4px;height:25.4px;box-sizing:border-box;background:#f3f3f3;border:1.5px solid #858585;border-radius:5px"></div></div>
<svg class="b" style="left:0;top:0" width="2052" height="1109" viewBox="0 0 2052 1109">
<path d="M1446.6 271.1 h16.8 l-8.4 14.2 Z" fill="#000"/>
<path d="M1446.6 595.1 h16.8 l-8.4 14.2 Z" fill="#000"/>
<path d="M1446.6 905.1 h16.8 l-8.4 14.2 Z" fill="#000"/>
<g transform="translate(1962.8,379.8)" stroke="#4d6f87" stroke-width="1.5" stroke-linejoin="round"><path d="M3.8 9 V2 Q3.8 0.8 5 0.8 H9.5 Q10.4 0.8 10.9 1.6 L11.8 3 H26 Q27.6 3 27.6 4.6 V9 Z" fill="#cfe8f7"/><path d="M1 8.4 H30.6 L29.2 24.2 H6.6 Q5.6 24.2 5.3 23.2 L0.6 9.4 Q0.4 8.4 1 8.4 Z" fill="#b9dcf2"/></g>
<path d="M1974.4 658.7 l5.8 5.8 l5.8 -5.8" fill="none" stroke="#3a3a3a" stroke-width="1.5" stroke-linecap="round" stroke-linejoin="round"/>
<g transform="translate(1962.8,696.0)" stroke="#4d6f87" stroke-width="1.5" stroke-linejoin="round"><path d="M3.8 9 V2 Q3.8 0.8 5 0.8 H9.5 Q10.4 0.8 10.9 1.6 L11.8 3 H26 Q27.6 3 27.6 4.6 V9 Z" fill="#cfe8f7"/><path d="M1 8.4 H30.6 L29.2 24.2 H6.6 Q5.6 24.2 5.3 23.2 L0.6 9.4 Q0.4 8.4 1 8.4 Z" fill="#b9dcf2"/></g>
<path d="M1974.4 798.7 l5.8 5.8 l5.8 -5.8" fill="none" stroke="#3a3a3a" stroke-width="1.5" stroke-linecap="round" stroke-linejoin="round"/>
<path d="M1974.4 848.7 l5.8 5.8 l5.8 -5.8" fill="none" stroke="#3a3a3a" stroke-width="1.5" stroke-linecap="round" stroke-linejoin="round"/>
<path d="M1816.4 968.7 l5.8 5.8 l5.8 -5.8" fill="none" stroke="#3a3a3a" stroke-width="1.5" stroke-linecap="round" stroke-linejoin="round"/>
<path d="M1974.4 968.7 l5.8 5.8 l5.8 -5.8" fill="none" stroke="#3a3a3a" stroke-width="1.5" stroke-linecap="round" stroke-linejoin="round"/>
<path d="M1816.4 1018.7 l5.8 5.8 l5.8 -5.8" fill="none" stroke="#3a3a3a" stroke-width="1.5" stroke-linecap="round" stroke-linejoin="round"/>
<path d="M1974.4 1018.7 l5.8 5.8 l5.8 -5.8" fill="none" stroke="#3a3a3a" stroke-width="1.5" stroke-linecap="round" stroke-linejoin="round"/>
<path d="M1974.4 1068.7 l5.8 5.8 l5.8 -5.8" fill="none" stroke="#3a3a3a" stroke-width="1.5" stroke-linecap="round" stroke-linejoin="round"/>
</svg>
<div class="b" style="left:2.00px;top:1108.00px;width:2048.00px;height:56.00px;background:#e7e7e7;border-radius:0 0 14px 14px;"></div>
<div class="b" style="left:2.00px;top:1107.80px;width:2048.00px;height:2.00px;background:#9b9b9b;"></div>
<div class="t" style="left:30.30px;top:1124.60px;font-size:22.13px;line-height:26.56px;letter-spacing:-0.556px;color:#000;">Zoom:</div>
<div class="b" style="left:106.50px;top:1130.40px;width:238.80px;height:7.20px;background:#e9e9e9;border:1px solid #d6d6d6;box-sizing:border-box;border-radius:2px;"></div>
<div class="b" style="left:140.20px;top:1124.20px;width:20.80px;height:20.60px;background:#0b78d7;"></div>
<div class="t" style="left:358.70px;top:1124.60px;font-size:22.13px;line-height:26.56px;letter-spacing:0.217px;color:#000;">38 %</div>
<div class="b" style="left:465.6px;top:1116.4px;width:76.8px;height:41.8px;box-sizing:border-box;background:#fafafa;border:1.3px solid #dadada;border-bottom-color:#c4c4c4;border-radius:4px"></div>
<div class="b" style="left:557.6px;top:1116.4px;width:76.8px;height:41.8px;box-sizing:border-box;background:#fafafa;border:1.3px solid #dadada;border-bottom-color:#c4c4c4;border-radius:4px"></div>
<div class="b" style="left:649.2px;top:1116.4px;width:77.2px;height:41.8px;box-sizing:border-box;background:#fafafa;border:1.3px solid #dadada;border-bottom-color:#c4c4c4;border-radius:4px"></div>
<div class="b" style="left:741.2px;top:1116.4px;width:77.2px;height:41.8px;box-sizing:border-box;background:#fafafa;border:1.3px solid #dadada;border-bottom-color:#c4c4c4;border-radius:4px"></div>
<div class="t" style="left:500.40px;top:1124.60px;font-size:22.13px;line-height:26.56px;letter-spacing:0.000px;color:#000;">-</div>
<div class="t" style="left:589.60px;top:1124.60px;font-size:22.13px;line-height:26.56px;letter-spacing:0.000px;color:#000;">+</div>
<div class="t" style="left:673.00px;top:1124.60px;font-size:22.13px;line-height:26.56px;letter-spacing:-0.583px;color:#000;">1:1</div>
<div class="t" style="left:768.90px;top:1124.60px;font-size:22.13px;line-height:26.56px;letter-spacing:-0.593px;color:#000;">Fit</div>
<div class="b" style="left:832.0px;top:1122.3px;width:26.0px;height:26.0px;box-sizing:border-box;background:#0b6cc4;border-radius:4.5px"></div><svg class="b" style="left:832.0px;top:1122.3px" width="26" height="26"><path d="M6.8 13 L11.2 17.4 L19.4 8.6" fill="none" stroke="#fff" stroke-width="1.8" stroke-linecap="round" stroke-linejoin="round"/></svg>
<div class="t" style="left:868.30px;top:1124.60px;font-size:22.13px;line-height:26.56px;letter-spacing:-0.195px;color:#000;">Auto Fit</div>
<div class="b" style="left:1029.8px;top:1122.3px;width:25.6px;height:25.6px;box-sizing:border-box;background:#f3f3f3;border:1.5px solid #858585;border-radius:5px"></div>
<div class="t" style="left:1066.80px;top:1124.60px;font-size:22.13px;line-height:26.56px;letter-spacing:-0.300px;color:#000;">Display outlines</div>
<svg class="b" style="left:1700px;top:1120px" width="40" height="34" viewBox="1700 1120 40 34"><path d="M1703.4 1138.2 L1708 1134 L1713.2 1139.6 L1729.4 1125.6 L1733.2 1130.2 L1712.8 1148.6 Z" fill="#72c163" stroke="#4f9e44" stroke-width="1.6" stroke-linejoin="round"/></svg>
<div class="t" style="left:1958.00px;top:1127.55px;font-size:23.46px;line-height:28.15px;letter-spacing:-0.953px;color:#dadada;">filepuma</div>
<div class="t" style="left:1754.30px;top:1124.60px;font-size:22.13px;line-height:26.56px;letter-spacing:-0.325px;color:#000;">1188x564 (RAM: 2617kB)</div>
<svg class="b" style="left:2030px;top:1146px" width="18" height="16" viewBox="0 0 18 16"><g fill="#c2c2c2"><rect x="10" y="2" width="3" height="3"/><rect x="5" y="7" width="3" height="3"/><rect x="10" y="7" width="3" height="3"/><rect x="0" y="12" width="3" height="3"/><rect x="5" y="12" width="3" height="3"/><rect x="10" y="12" width="3" height="3"/></g></svg>
</body></html>
